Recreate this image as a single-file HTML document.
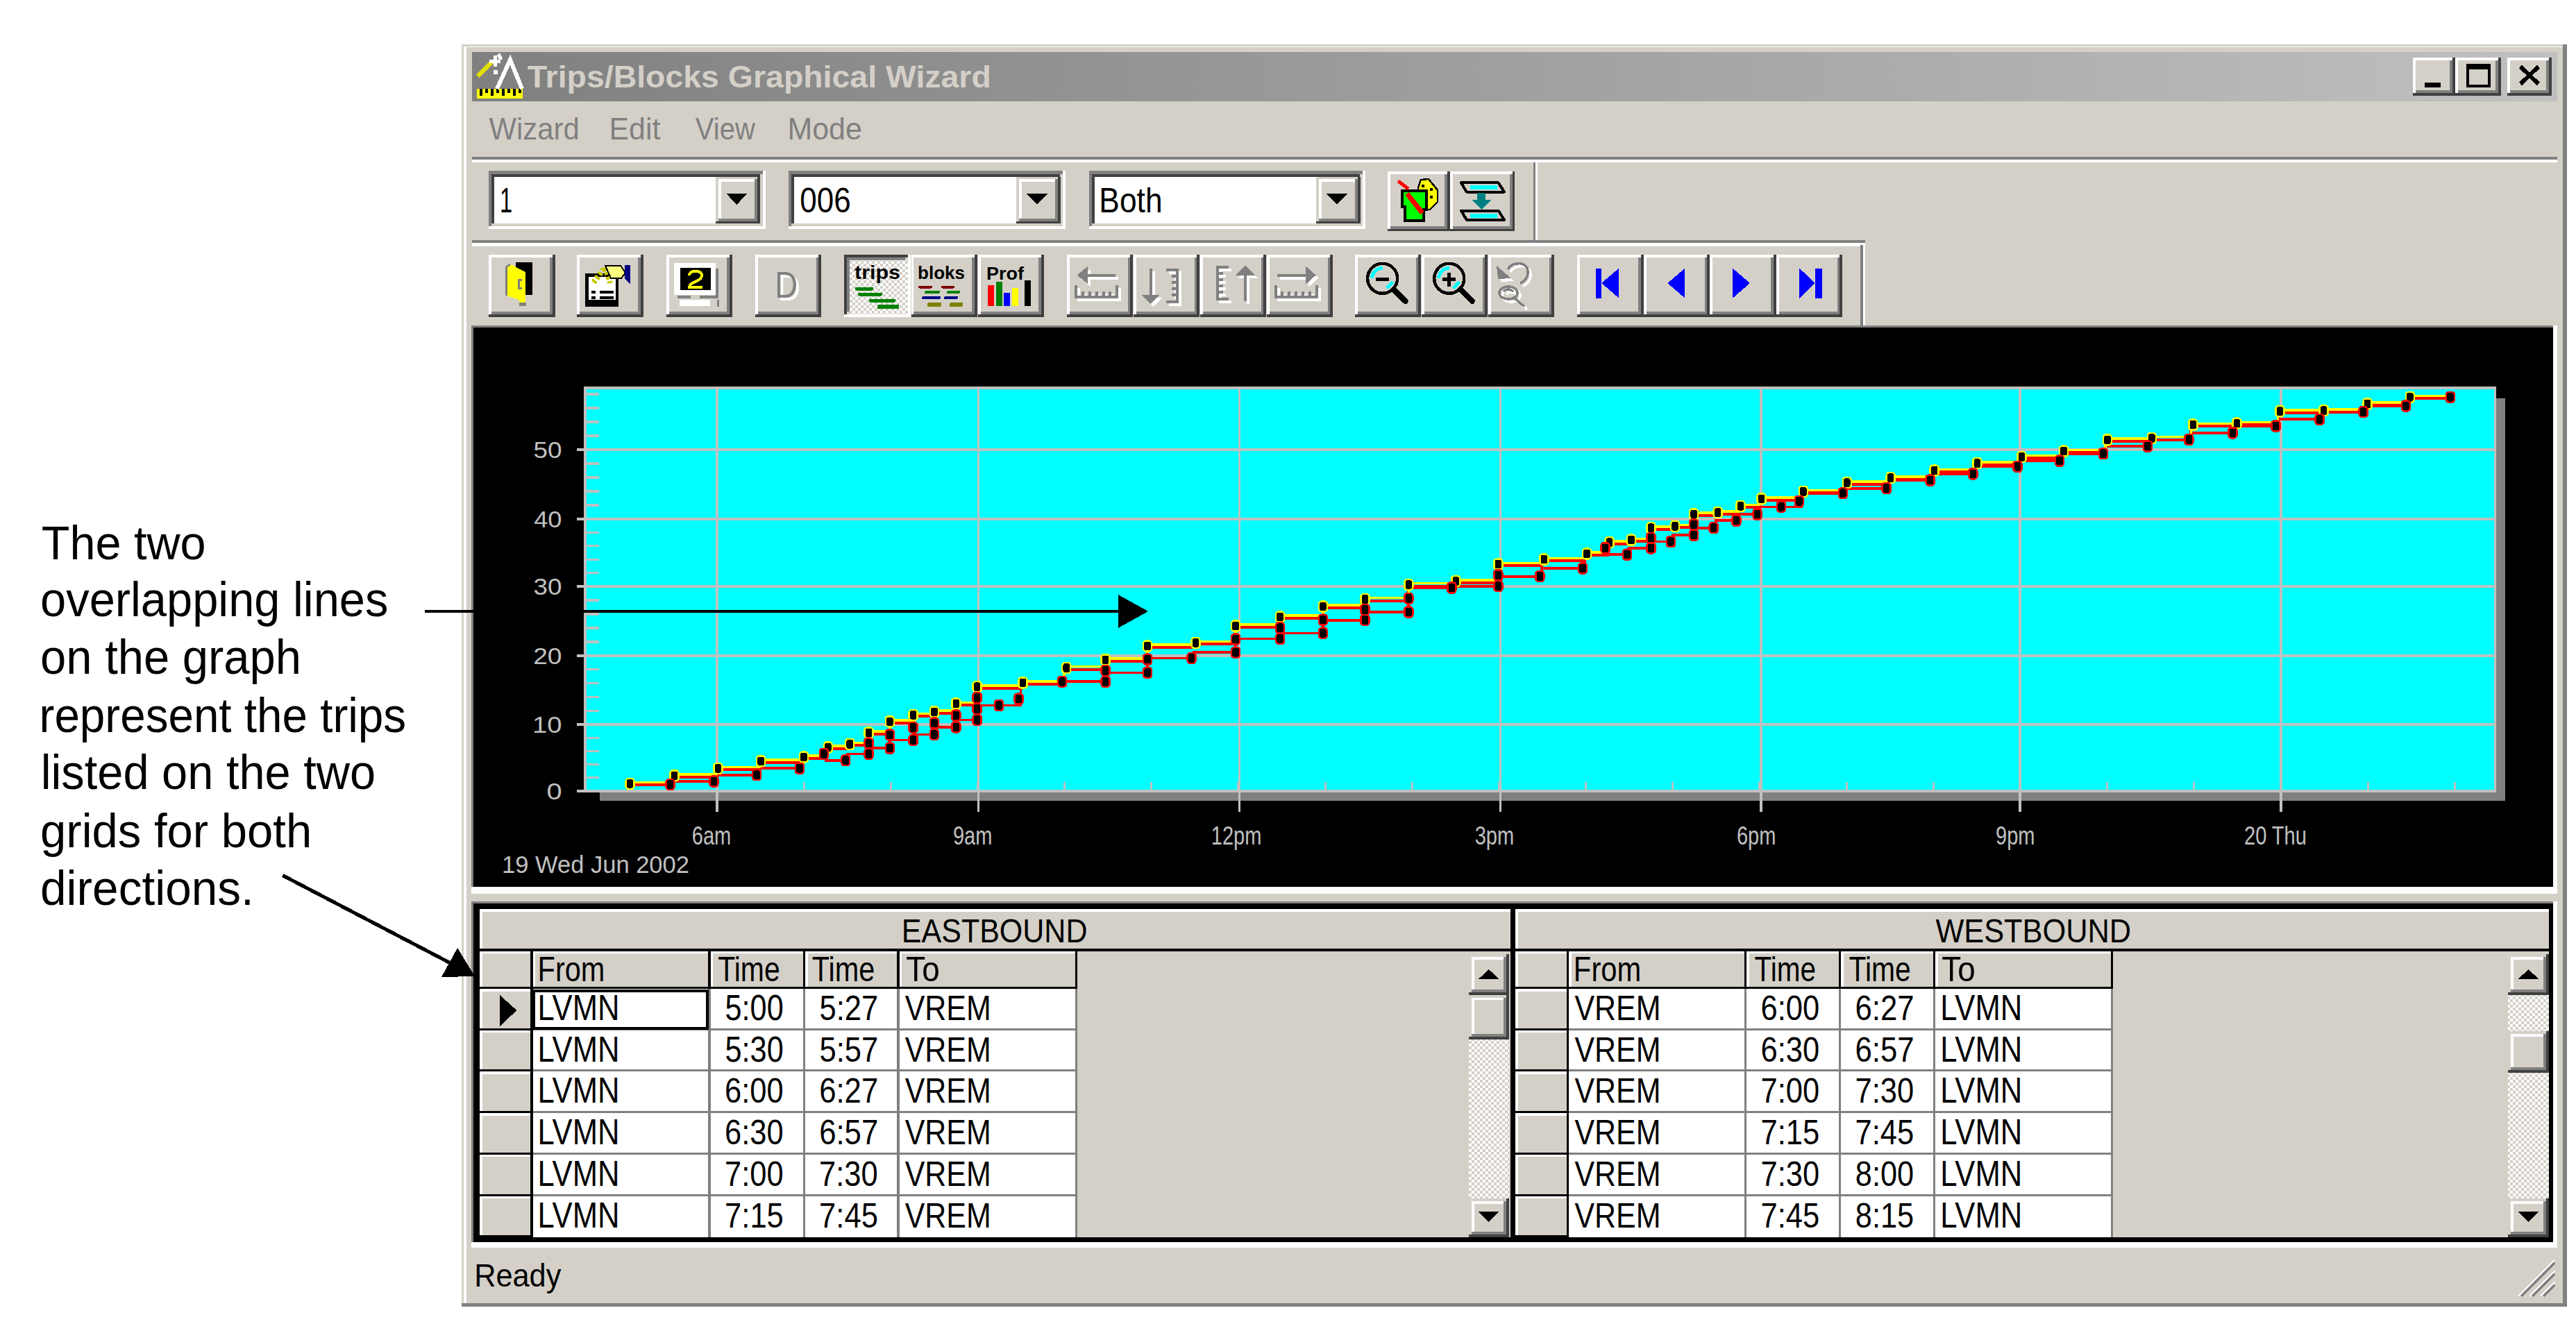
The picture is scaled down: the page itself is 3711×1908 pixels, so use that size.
<!DOCTYPE html>
<html><head><meta charset="utf-8"><style>
html,body{margin:0;padding:0;background:#fff;}
svg{display:block;font-family:"Liberation Sans",sans-serif;}
</style></head><body>
<svg width="3711" height="1908" viewBox="0 0 3711 1908" shape-rendering="crispEdges">
<rect width="3711" height="1908" fill="#FFFFFF"/>
<text transform="translate(59.70,805.90) scale(0.9585,1)" font-size="69.48" font-weight="normal" fill="#000" >The two</text>
<text transform="translate(58.09,887.60) scale(0.9615,1)" font-size="69.48" font-weight="normal" fill="#000" >overlapping lines</text>
<text transform="translate(58.09,970.50) scale(0.9639,1)" font-size="69.48" font-weight="normal" fill="#000" >on the graph</text>
<text transform="translate(56.54,1054.70) scale(0.9442,1)" font-size="69.48" font-weight="normal" fill="#000" >represent the trips</text>
<text transform="translate(58.70,1136.70) scale(0.9610,1)" font-size="69.48" font-weight="normal" fill="#000" >listed on the two</text>
<text transform="translate(58.09,1221.00) scale(0.9644,1)" font-size="69.48" font-weight="normal" fill="#000" >grids for both</text>
<text transform="translate(58.06,1304.00) scale(0.9717,1)" font-size="69.48" font-weight="normal" fill="#000" >directions.</text>
<rect x="665.0" y="64.0" width="3033.0" height="1819.0" fill="#808080"/>
<rect x="665.0" y="64.0" width="3027.0" height="1814.0" fill="#D4D0C8"/>
<rect x="668.0" y="67.0" width="3024.0" height="1811.0" fill="#FFFFFF"/>
<rect x="672.0" y="68.0" width="3020.0" height="1810.0" fill="#D4D0C8"/>
<defs><linearGradient id="tg" x1="0" x2="1" y1="0" y2="0"><stop offset="0" stop-color="#808080"/><stop offset="1" stop-color="#C0C0C0"/></linearGradient><pattern id="chk" width="8" height="8" patternUnits="userSpaceOnUse"><rect width="8" height="8" fill="#FFFFFF"/><rect width="4" height="4" fill="#D4D0C8"/><rect x="4" y="4" width="4" height="4" fill="#D4D0C8"/></pattern></defs>
<rect x="679.5" y="75.0" width="3004.5" height="71.0" fill="url(#tg)"/>
<text transform="translate(759.78,126.10) scale(1.0412,1)" font-size="44.62" font-weight="bold" fill="#D4D0C8" >Trips/Blocks Graphical Wizard</text>
<g>
<rect x="687.0" y="128.0" width="66.0" height="14.0" fill="#FFFF00"/>
<rect x="691.0" y="128.0" width="4.0" height="10.0" fill="#000000"/>
<rect x="699.0" y="128.0" width="4.0" height="6.0" fill="#000000"/>
<rect x="707.0" y="128.0" width="4.0" height="10.0" fill="#000000"/>
<rect x="715.0" y="128.0" width="4.0" height="6.0" fill="#000000"/>
<rect x="723.0" y="128.0" width="4.0" height="10.0" fill="#000000"/>
<rect x="731.0" y="128.0" width="4.0" height="6.0" fill="#000000"/>
<rect x="739.0" y="128.0" width="4.0" height="10.0" fill="#000000"/>
<rect x="747.0" y="128.0" width="4.0" height="6.0" fill="#000000"/>
<line x1="688" y1="110" x2="710" y2="88" stroke="#E0E000" stroke-width="7"/>
<polyline points="716,128 735,86 752,128" fill="none" stroke="#FFFFFF" stroke-width="6"/>
<path d="M705,88 h16 M713,80 v16 M718,78 l4,8" stroke="#FFFFFF" stroke-width="5"/>
<rect x="711.0" y="101.0" width="6.0" height="6.0" fill="#FFFFFF"/>
</g>
<rect x="3476.0" y="82.5" width="61.0" height="55.5" fill="#404040"/>
<rect x="3476.0" y="82.5" width="57.0" height="51.5" fill="#FFFFFF"/>
<rect x="3480.0" y="86.5" width="53.0" height="47.5" fill="#808080"/>
<rect x="3480.0" y="86.5" width="49.0" height="43.5" fill="#D4D0C8"/>
<rect x="3537.0" y="82.5" width="66.0" height="55.5" fill="#404040"/>
<rect x="3537.0" y="82.5" width="62.0" height="51.5" fill="#FFFFFF"/>
<rect x="3541.0" y="86.5" width="58.0" height="47.5" fill="#808080"/>
<rect x="3541.0" y="86.5" width="54.0" height="43.5" fill="#D4D0C8"/>
<rect x="3612.0" y="82.5" width="64.0" height="55.5" fill="#404040"/>
<rect x="3612.0" y="82.5" width="60.0" height="51.5" fill="#FFFFFF"/>
<rect x="3616.0" y="86.5" width="56.0" height="47.5" fill="#808080"/>
<rect x="3616.0" y="86.5" width="52.0" height="43.5" fill="#D4D0C8"/>
<rect x="3492.8" y="118.5" width="23.0" height="7.1" fill="#000000"/>
<rect x="3553.0" y="91.5" width="35.0" height="34.1" fill="#000000"/>
<rect x="3557.0" y="99.5" width="27.0" height="22.1" fill="#D4D0C8"/>
<path d="M3631,96 L3657,121 M3657,96 L3631,121" stroke="#000" stroke-width="6"/>
<text transform="translate(704.42,201.00) scale(0.9293,1)" font-size="45.06" font-weight="normal" fill="#808080" >Wizard</text>
<text transform="translate(877.49,201.00) scale(0.9509,1)" font-size="45.06" font-weight="normal" fill="#808080" >Edit</text>
<text transform="translate(1001.82,201.00) scale(0.8886,1)" font-size="45.06" font-weight="normal" fill="#808080" >View</text>
<text transform="translate(1134.48,201.00) scale(0.9532,1)" font-size="45.06" font-weight="normal" fill="#808080" >Mode</text>
<rect x="679.5" y="226.0" width="3004.5" height="4.0" fill="#808080"/>
<rect x="679.5" y="230.0" width="3004.5" height="4.0" fill="#FFFFFF"/>
<rect x="704.0" y="246.3" width="399.0" height="84.1" fill="#FFFFFF"/>
<rect x="704.0" y="246.3" width="394.8" height="79.9" fill="#808080"/>
<rect x="708.2" y="250.5" width="390.6" height="75.7" fill="#D4D0C8"/>
<rect x="708.2" y="250.5" width="386.4" height="71.5" fill="#404040"/>
<rect x="712.4" y="254.7" width="382.2" height="67.3" fill="#FFFFFF"/>
<rect x="1031.3" y="254.5" width="63.5" height="67.9" fill="#404040"/>
<rect x="1031.3" y="254.5" width="59.6" height="64.0" fill="#D4D0C8"/>
<rect x="1035.2" y="258.4" width="55.7" height="60.1" fill="#808080"/>
<rect x="1035.2" y="258.4" width="51.8" height="56.2" fill="#FFFFFF"/>
<rect x="1039.1" y="262.3" width="47.9" height="52.3" fill="#D4D0C8"/>
<polygon points="1046.3,279.0 1076.3,279.0 1061.3,295.0" fill="#000"/>
<text transform="translate(720.11,306.00) scale(0.6618,1)" font-size="49.42" font-weight="normal" fill="#000" >1</text>
<rect x="1135.6" y="246.3" width="399.4" height="84.1" fill="#FFFFFF"/>
<rect x="1135.6" y="246.3" width="395.2" height="79.9" fill="#808080"/>
<rect x="1139.8" y="250.5" width="391.0" height="75.7" fill="#D4D0C8"/>
<rect x="1139.8" y="250.5" width="386.8" height="71.5" fill="#404040"/>
<rect x="1144.0" y="254.7" width="382.6" height="67.3" fill="#FFFFFF"/>
<rect x="1464.0" y="254.5" width="63.5" height="67.9" fill="#404040"/>
<rect x="1464.0" y="254.5" width="59.6" height="64.0" fill="#D4D0C8"/>
<rect x="1467.9" y="258.4" width="55.7" height="60.1" fill="#808080"/>
<rect x="1467.9" y="258.4" width="51.8" height="56.2" fill="#FFFFFF"/>
<rect x="1471.8" y="262.3" width="47.9" height="52.3" fill="#D4D0C8"/>
<polygon points="1479.0,279.0 1509.0,279.0 1494.0,295.0" fill="#000"/>
<text transform="translate(1152.28,306.00) scale(0.8896,1)" font-size="49.42" font-weight="normal" fill="#000" >006</text>
<rect x="1569.0" y="246.3" width="398.2" height="84.1" fill="#FFFFFF"/>
<rect x="1569.0" y="246.3" width="394.0" height="79.9" fill="#808080"/>
<rect x="1573.2" y="250.5" width="389.8" height="75.7" fill="#D4D0C8"/>
<rect x="1573.2" y="250.5" width="385.6" height="71.5" fill="#404040"/>
<rect x="1577.4" y="254.7" width="381.4" height="67.3" fill="#FFFFFF"/>
<rect x="1896.0" y="254.5" width="63.5" height="67.9" fill="#404040"/>
<rect x="1896.0" y="254.5" width="59.6" height="64.0" fill="#D4D0C8"/>
<rect x="1899.9" y="258.4" width="55.7" height="60.1" fill="#808080"/>
<rect x="1899.9" y="258.4" width="51.8" height="56.2" fill="#FFFFFF"/>
<rect x="1903.8" y="262.3" width="47.9" height="52.3" fill="#D4D0C8"/>
<polygon points="1911.0,279.0 1941.0,279.0 1926.0,295.0" fill="#000"/>
<text transform="translate(1583.36,306.00) scale(0.8973,1)" font-size="49.42" font-weight="normal" fill="#000" >Both</text>
<rect x="1999.3" y="246.8" width="89.5" height="86.6" fill="#404040"/>
<rect x="1999.3" y="246.8" width="85.6" height="82.7" fill="#FFFFFF"/>
<rect x="2003.2" y="250.7" width="81.7" height="78.8" fill="#808080"/>
<rect x="2003.2" y="250.7" width="77.8" height="74.9" fill="#D4D0C8"/>
<rect x="2088.8" y="246.8" width="93.6" height="86.6" fill="#404040"/>
<rect x="2088.8" y="246.8" width="89.7" height="82.7" fill="#FFFFFF"/>
<rect x="2092.7" y="250.7" width="85.8" height="78.8" fill="#808080"/>
<rect x="2092.7" y="250.7" width="81.9" height="74.9" fill="#D4D0C8"/>
<rect x="2209.0" y="234.0" width="3.0" height="112.0" fill="#808080"/>
<rect x="2212.0" y="234.0" width="3.0" height="112.0" fill="#FFFFFF"/>
<rect x="679.5" y="346.3" width="2007.5" height="3.3" fill="#808080"/>
<rect x="679.5" y="349.6" width="2007.5" height="5.4" fill="#FFFFFF"/>
<rect x="2680.4" y="353.0" width="3.6" height="117.0" fill="#808080"/>
<rect x="2684.0" y="353.0" width="3.0" height="117.0" fill="#FFFFFF"/>
<rect x="704.0" y="367.0" width="95.5" height="90.0" fill="#404040"/>
<rect x="704.0" y="367.0" width="91.6" height="86.1" fill="#FFFFFF"/>
<rect x="707.9" y="370.9" width="87.7" height="82.2" fill="#808080"/>
<rect x="707.9" y="370.9" width="83.8" height="78.3" fill="#D4D0C8"/>
<rect x="831.3" y="367.0" width="95.5" height="90.0" fill="#404040"/>
<rect x="831.3" y="367.0" width="91.6" height="86.1" fill="#FFFFFF"/>
<rect x="835.2" y="370.9" width="87.7" height="82.2" fill="#808080"/>
<rect x="835.2" y="370.9" width="83.8" height="78.3" fill="#D4D0C8"/>
<rect x="959.6" y="367.0" width="95.5" height="90.0" fill="#404040"/>
<rect x="959.6" y="367.0" width="91.6" height="86.1" fill="#FFFFFF"/>
<rect x="963.5" y="370.9" width="87.7" height="82.2" fill="#808080"/>
<rect x="963.5" y="370.9" width="83.8" height="78.3" fill="#D4D0C8"/>
<rect x="1087.8" y="367.0" width="95.5" height="90.0" fill="#404040"/>
<rect x="1087.8" y="367.0" width="91.6" height="86.1" fill="#FFFFFF"/>
<rect x="1091.7" y="370.9" width="87.7" height="82.2" fill="#808080"/>
<rect x="1091.7" y="370.9" width="83.8" height="78.3" fill="#D4D0C8"/>
<rect x="1216.3" y="367.0" width="95.5" height="90.0" fill="#FFFFFF"/>
<rect x="1216.3" y="367.0" width="91.6" height="86.1" fill="#404040"/>
<rect x="1220.2" y="370.9" width="87.7" height="82.2" fill="#D4D0C8"/>
<rect x="1220.2" y="370.9" width="83.8" height="78.3" fill="#808080"/>
<rect x="1224.1" y="374.8" width="83.8" height="78.3" fill="url(#chk)"/>
<rect x="1312.5" y="367.0" width="95.5" height="90.0" fill="#404040"/>
<rect x="1312.5" y="367.0" width="91.6" height="86.1" fill="#FFFFFF"/>
<rect x="1316.4" y="370.9" width="87.7" height="82.2" fill="#808080"/>
<rect x="1316.4" y="370.9" width="83.8" height="78.3" fill="#D4D0C8"/>
<rect x="1408.7" y="367.0" width="95.5" height="90.0" fill="#404040"/>
<rect x="1408.7" y="367.0" width="91.6" height="86.1" fill="#FFFFFF"/>
<rect x="1412.6" y="370.9" width="87.7" height="82.2" fill="#808080"/>
<rect x="1412.6" y="370.9" width="83.8" height="78.3" fill="#D4D0C8"/>
<rect x="1536.8" y="367.0" width="95.5" height="90.0" fill="#404040"/>
<rect x="1536.8" y="367.0" width="91.6" height="86.1" fill="#FFFFFF"/>
<rect x="1540.7" y="370.9" width="87.7" height="82.2" fill="#808080"/>
<rect x="1540.7" y="370.9" width="83.8" height="78.3" fill="#D4D0C8"/>
<rect x="1632.8" y="367.0" width="95.5" height="90.0" fill="#404040"/>
<rect x="1632.8" y="367.0" width="91.6" height="86.1" fill="#FFFFFF"/>
<rect x="1636.7" y="370.9" width="87.7" height="82.2" fill="#808080"/>
<rect x="1636.7" y="370.9" width="83.8" height="78.3" fill="#D4D0C8"/>
<rect x="1728.8" y="367.0" width="95.5" height="90.0" fill="#404040"/>
<rect x="1728.8" y="367.0" width="91.6" height="86.1" fill="#FFFFFF"/>
<rect x="1732.7" y="370.9" width="87.7" height="82.2" fill="#808080"/>
<rect x="1732.7" y="370.9" width="83.8" height="78.3" fill="#D4D0C8"/>
<rect x="1824.8" y="367.0" width="95.5" height="90.0" fill="#404040"/>
<rect x="1824.8" y="367.0" width="91.6" height="86.1" fill="#FFFFFF"/>
<rect x="1828.7" y="370.9" width="87.7" height="82.2" fill="#808080"/>
<rect x="1828.7" y="370.9" width="83.8" height="78.3" fill="#D4D0C8"/>
<rect x="1951.8" y="367.0" width="95.5" height="90.0" fill="#404040"/>
<rect x="1951.8" y="367.0" width="91.6" height="86.1" fill="#FFFFFF"/>
<rect x="1955.7" y="370.9" width="87.7" height="82.2" fill="#808080"/>
<rect x="1955.7" y="370.9" width="83.8" height="78.3" fill="#D4D0C8"/>
<rect x="2047.8" y="367.0" width="95.5" height="90.0" fill="#404040"/>
<rect x="2047.8" y="367.0" width="91.6" height="86.1" fill="#FFFFFF"/>
<rect x="2051.7" y="370.9" width="87.7" height="82.2" fill="#808080"/>
<rect x="2051.7" y="370.9" width="83.8" height="78.3" fill="#D4D0C8"/>
<rect x="2143.8" y="367.0" width="95.5" height="90.0" fill="#404040"/>
<rect x="2143.8" y="367.0" width="91.6" height="86.1" fill="#FFFFFF"/>
<rect x="2147.7" y="370.9" width="87.7" height="82.2" fill="#808080"/>
<rect x="2147.7" y="370.9" width="83.8" height="78.3" fill="#D4D0C8"/>
<rect x="2272.3" y="367.0" width="95.5" height="90.0" fill="#404040"/>
<rect x="2272.3" y="367.0" width="91.6" height="86.1" fill="#FFFFFF"/>
<rect x="2276.2" y="370.9" width="87.7" height="82.2" fill="#808080"/>
<rect x="2276.2" y="370.9" width="83.8" height="78.3" fill="#D4D0C8"/>
<rect x="2367.8" y="367.0" width="95.5" height="90.0" fill="#404040"/>
<rect x="2367.8" y="367.0" width="91.6" height="86.1" fill="#FFFFFF"/>
<rect x="2371.7" y="370.9" width="87.7" height="82.2" fill="#808080"/>
<rect x="2371.7" y="370.9" width="83.8" height="78.3" fill="#D4D0C8"/>
<rect x="2463.3" y="367.0" width="95.5" height="90.0" fill="#404040"/>
<rect x="2463.3" y="367.0" width="91.6" height="86.1" fill="#FFFFFF"/>
<rect x="2467.2" y="370.9" width="87.7" height="82.2" fill="#808080"/>
<rect x="2467.2" y="370.9" width="83.8" height="78.3" fill="#D4D0C8"/>
<rect x="2558.8" y="367.0" width="95.5" height="90.0" fill="#404040"/>
<rect x="2558.8" y="367.0" width="91.6" height="86.1" fill="#FFFFFF"/>
<rect x="2562.7" y="370.9" width="87.7" height="82.2" fill="#808080"/>
<rect x="2562.7" y="370.9" width="83.8" height="78.3" fill="#D4D0C8"/>
<g>
<rect x="743.3" y="378.2" width="23.7" height="46.8" fill="#000000"/>
<polygon points="729,385 735,381 740,383 745,386 757,392 757,436 748,436 748,432 741,430 735,428 729,426" fill="#FFFF00"/>
<polyline points="729,426 729,385 735,381" fill="none" stroke="#808080" stroke-width="3"/>
<path d="M752,403 h-5 v12 h5" fill="none" stroke="#808080" stroke-width="3"/>
<rect x="748.0" y="436.0" width="10.0" height="5.0" fill="#808080"/>
</g>
<rect x="843.2" y="394.2" width="48.2" height="47.6" fill="#000000"/>
<rect x="848.0" y="399.0" width="39.0" height="33.0" fill="#FFFFFF"/>
<rect x="852.0" y="419.0" width="6.0" height="4.0" fill="#000000"/>
<rect x="864.0" y="419.0" width="20.0" height="4.0" fill="#000000"/>
<rect x="852.0" y="427.0" width="6.0" height="4.0" fill="#000000"/>
<rect x="864.0" y="427.0" width="20.0" height="4.0" fill="#000000"/>
<polyline points="855,407 872,385 879,408" fill="none" stroke="#C8C800" stroke-width="8" stroke-dasharray="4 3"/>
<polygon points="872,383 894,383 901,393 895,401 880,401" fill="#FFFF80" stroke="#000" stroke-width="2"/>
<rect x="900.0" y="382.0" width="8.0" height="19.0" fill="#000080"/>
<polygon points="900,401 908,401 908,410" fill="#000080"/>
<rect x="1031.0" y="387.0" width="4.0" height="43.0" fill="#808080"/>
<rect x="971.0" y="378.9" width="60.2" height="46.1" fill="#FFFFFF"/>
<rect x="979.5" y="385.9" width="44.0" height="32.1" fill="#000000"/>
<path d="M993,397 q0,-6 9,-6 q9,0 9,6 q0,5 -9,9 q-9,3 -9,8 h19" fill="none" stroke="#FFFF00" stroke-width="4"/>
<rect x="976.0" y="426.0" width="19.0" height="4.0" fill="#808080"/>
<rect x="1008.0" y="426.0" width="27.0" height="4.0" fill="#808080"/>
<rect x="979.0" y="432.0" width="44.0" height="9.0" fill="#FFFFFF"/>
<rect x="1033.0" y="432.0" width="3.0" height="10.0" fill="#808080"/>
<text transform="translate(1120.26,433.00) scale(0.8477,1)" font-size="53.78" font-weight="normal" fill="#FFFFFF" >D</text>
<text transform="translate(1116.26,429.00) scale(0.8477,1)" font-size="53.78" font-weight="normal" fill="#808080" >D</text>
<text x="1231" y="402" font-size="28" font-weight="bold" fill="#000" textLength="66" lengthAdjust="spacingAndGlyphs">trips</text>
<rect x="1232" y="413.5" width="26" height="5.0" rx="2" fill="#008000"/>
<rect x="1236" y="421.5" width="35" height="5.0" rx="2" fill="#008000"/>
<rect x="1252" y="430.5" width="38" height="5.0" rx="2" fill="#008000"/>
<rect x="1264" y="439" width="31" height="6" rx="2" fill="#008000"/>
<text x="1322" y="402" font-size="26" font-weight="bold" fill="#000" textLength="68" lengthAdjust="spacingAndGlyphs">bloks</text>
<rect x="1323" y="411.5" width="20" height="4.0" rx="2" fill="#800000"/>
<rect x="1356" y="411.5" width="19" height="4.0" rx="2" fill="#800000"/>
<rect x="1332" y="419" width="22" height="4" rx="2" fill="#008000"/>
<rect x="1364" y="419" width="19" height="4" rx="2" fill="#008000"/>
<rect x="1328" y="427" width="27" height="4" rx="2" fill="#000080"/>
<rect x="1360" y="427" width="20" height="4" rx="2" fill="#000080"/>
<rect x="1336" y="436" width="20" height="6" rx="2" fill="#808000"/>
<rect x="1368" y="436" width="19" height="6" rx="2" fill="#808000"/>
<text x="1421" y="403" font-size="26" font-weight="bold" fill="#000" textLength="54" lengthAdjust="spacingAndGlyphs">Prof</text>
<rect x="1423.0" y="411.0" width="8.5" height="30.0" fill="#FF0000"/>
<rect x="1435.0" y="406.0" width="8.5" height="35.0" fill="#008000"/>
<rect x="1446.0" y="422.0" width="8.5" height="19.0" fill="#0000FF"/>
<rect x="1458.0" y="415.0" width="8.5" height="26.0" fill="#FFFF00"/>
<rect x="1476.0" y="404.0" width="8.5" height="37.0" fill="#000000"/>
<polygon points="1551.7,396.5 1567.3,383.3 1567.3,409.7" fill="#FFFFFF" transform="translate(4,4)"/>
<polygon points="1551.7,396.5 1567.3,383.3 1567.3,409.7" fill="#808080"/>
<path d="M1567,396.5 H1607" fill="none" stroke="#FFFFFF" stroke-width="4" transform="translate(4,4)"/>
<path d="M1567,396.5 H1607" fill="none" stroke="#808080" stroke-width="4"/>
<path d="M1550.3,411 V427.5 H1609 V411 M1559.5,427.5 V420 M1569.6,427.5 V420 M1579.7,427.5 V420 M1589.8,427.5 V420 M1599,427.5 V420" fill="none" stroke="#FFFFFF" stroke-width="4" transform="translate(4,4)"/>
<path d="M1550.3,411 V427.5 H1609 V411 M1559.5,427.5 V420 M1569.6,427.5 V420 M1579.7,427.5 V420 M1589.8,427.5 V420 M1599,427.5 V420" fill="none" stroke="#808080" stroke-width="4"/>
<path d="M1658.3,387 V425" fill="none" stroke="#FFFFFF" stroke-width="4" transform="translate(4,4)"/>
<path d="M1658.3,387 V425" fill="none" stroke="#808080" stroke-width="4"/>
<polygon points="1644,425 1670.5,425 1657.5,437.6" fill="#FFFFFF" transform="translate(4,4)"/>
<polygon points="1644,425 1670.5,425 1657.5,437.6" fill="#808080"/>
<path d="M1680,389 H1696.3 V435.3 H1680 M1696,398 H1688 M1696,407 H1688 M1696,416 H1688 M1696,425 H1688" fill="none" stroke="#FFFFFF" stroke-width="4" transform="translate(4,4)"/>
<path d="M1680,389 H1696.3 V435.3 H1680 M1696,398 H1688 M1696,407 H1688 M1696,416 H1688 M1696,425 H1688" fill="none" stroke="#808080" stroke-width="4"/>
<path d="M1770,385 H1753.8 V431 H1770 M1754,394 H1762 M1754,403 H1762 M1754,412 H1762 M1754,421 H1762" fill="none" stroke="#FFFFFF" stroke-width="4" transform="translate(4,4)"/>
<path d="M1770,385 H1753.8 V431 H1770 M1754,394 H1762 M1754,403 H1762 M1754,412 H1762 M1754,421 H1762" fill="none" stroke="#808080" stroke-width="4"/>
<polygon points="1780,397 1808,397 1794,382.6" fill="#FFFFFF" transform="translate(4,4)"/>
<polygon points="1780,397 1808,397 1794,382.6" fill="#808080"/>
<path d="M1794.2,397 V434" fill="none" stroke="#FFFFFF" stroke-width="4" transform="translate(4,4)"/>
<path d="M1794.2,397 V434" fill="none" stroke="#808080" stroke-width="4"/>
<path d="M1839.8,396.5 H1881" fill="none" stroke="#FFFFFF" stroke-width="4" transform="translate(4,4)"/>
<path d="M1839.8,396.5 H1881" fill="none" stroke="#808080" stroke-width="4"/>
<polygon points="1895.7,396.5 1881,383.3 1881,409.7" fill="#FFFFFF" transform="translate(4,4)"/>
<polygon points="1895.7,396.5 1881,383.3 1881,409.7" fill="#808080"/>
<path d="M1837.8,411 V427.5 H1897 V411 M1847,427.5 V420 M1857,427.5 V420 M1867,427.5 V420 M1877,427.5 V420 M1887,427.5 V420" fill="none" stroke="#FFFFFF" stroke-width="4" transform="translate(4,4)"/>
<path d="M1837.8,411 V427.5 H1897 V411 M1847,427.5 V420 M1857,427.5 V420 M1867,427.5 V420 M1877,427.5 V420 M1887,427.5 V420" fill="none" stroke="#808080" stroke-width="4"/>
<line x1="2007.6" y1="417" x2="2024.6" y2="434" stroke="#000" stroke-width="8" stroke-linecap="round"/>
<circle cx="1991.6" cy="401.3" r="21.5" fill="none" stroke="#000" stroke-width="4.5"/>
<path d="M1976.6,401.3 a15,15 0 0 1 15,-15" fill="none" stroke="#00FFFF" stroke-width="5"/>
<line x1="1997.6" y1="415" x2="2006.6" y2="406" stroke="#00FFFF" stroke-width="5"/>
<line x1="1981.6" y1="402.3" x2="2000.6" y2="402.3" stroke="#000" stroke-width="5"/>
<line x1="2103.7" y1="417" x2="2120.7" y2="434" stroke="#000" stroke-width="8" stroke-linecap="round"/>
<circle cx="2087.7" cy="401.3" r="21.5" fill="none" stroke="#000" stroke-width="4.5"/>
<path d="M2072.7,401.3 a15,15 0 0 1 15,-15" fill="none" stroke="#00FFFF" stroke-width="5"/>
<line x1="2093.7" y1="415" x2="2102.7" y2="406" stroke="#00FFFF" stroke-width="5"/>
<line x1="2077.7" y1="402.3" x2="2096.7" y2="402.3" stroke="#000" stroke-width="5"/>
<line x1="2087.2" y1="393" x2="2087.2" y2="413" stroke="#000" stroke-width="5"/>
<polygon points="2156,383 2177,401 2158,402" fill="#FFFFFF" transform="translate(4,4)"/>
<polygon points="2156,383 2177,401 2158,402" fill="#808080"/>
<path d="M2172,388 q6,-10 20,-8 q12,4 8,18 q-3,8 -10,10" fill="none" stroke="#FFFFFF" stroke-width="3.5" transform="translate(4,4)"/>
<path d="M2172,388 q6,-10 20,-8 q12,4 8,18 q-3,8 -10,10" fill="none" stroke="#808080" stroke-width="3.5"/>
<path d="M2160,422 a13,9 0 1 1 26,0 a13,9 0 1 1 -26,0 M2166,420 q7,-6 14,0 M2180,428 L2196,442" fill="none" stroke="#FFFFFF" stroke-width="3.5" transform="translate(4,4)"/>
<path d="M2160,422 a13,9 0 1 1 26,0 a13,9 0 1 1 -26,0 M2166,420 q7,-6 14,0 M2180,428 L2196,442" fill="none" stroke="#808080" stroke-width="3.5"/>
<polygon points="2043,271 2047,259 2058,258 2071,274 2071,291 2060,302 2054,302 2054,275 2043,275" fill="#FFFF00" stroke="#000" stroke-width="2.5"/>
<circle cx="2050" cy="268" r="2.5" fill="#000"/>
<circle cx="2062" cy="273" r="2.5" fill="#000"/>
<circle cx="2062" cy="284" r="2.5" fill="#000"/>
<polygon points="2020,275 2054.5,275 2054.5,302 2050.5,302 2050.5,317.6 2024.2,317.6 2024.2,297.5 2020,297.5" fill="#00FF00" stroke="#000" stroke-width="4"/>
<line x1="2027" y1="279" x2="2049" y2="307" stroke="#FF0000" stroke-width="7"/>
<line x1="2014" y1="261" x2="2029" y2="272" stroke="#FF0000" stroke-width="5"/>
<polygon points="2104.9,263.3 2158.5,263.3 2167,276.5 2112.7,276.5" fill="#D4D0C8" stroke="#000" stroke-width="4" stroke-linejoin="round"/>
<rect x="2118.0" y="267.3" width="39.0" height="6.0" fill="#00FFFF"/>
<polygon points="2104.9,303.5 2158.5,303.5 2167,316.7 2112.7,316.7" fill="#D4D0C8" stroke="#000" stroke-width="4" stroke-linejoin="round"/>
<rect x="2118.0" y="307.5" width="39.0" height="6.0" fill="#00FFFF"/>
<rect x="2128.0" y="278.0" width="12.0" height="14.0" fill="#008080"/>
<polygon points="2120,288 2148,288 2134,302" fill="#008080"/>
<rect x="2299.0" y="386.5" width="8.3" height="43.3" fill="#0000FF"/>
<polygon points="2307,408 2332.4,386.5 2332.4,429.8" fill="#0000FF"/>
<polygon points="2402.3,408 2427.4,386.5 2427.4,429.8" fill="#0000FF"/>
<polygon points="2521,408 2495.9,386.5 2495.9,429.8" fill="#0000FF"/>
<polygon points="2614.7,408 2592.3,386.5 2592.3,429.8" fill="#0000FF"/>
<rect x="2614.7" y="386.5" width="9.8" height="43.3" fill="#0000FF"/>
<rect x="679.0" y="469.0" width="3005.0" height="818.5" fill="#FFFFFF"/>
<rect x="679.0" y="469.0" width="2999.0" height="809.0" fill="#808080"/>
<rect x="682.0" y="472.0" width="2996.0" height="806.0" fill="#000000"/>
<rect x="864.0" y="1142.0" width="2745.0" height="12.0" fill="#808080"/>
<rect x="3594.0" y="574.0" width="15.0" height="580.0" fill="#808080"/>
<rect x="844.0" y="559.0" width="2750.0" height="581.0" fill="#00FFFF"/>
<rect x="841.0" y="557.0" width="2755.0" height="3.5" fill="#C0C0C0"/>
<rect x="841.0" y="557.0" width="3.5" height="585.0" fill="#C0C0C0"/>
<rect x="3593.0" y="557.0" width="3.0" height="585.0" fill="#C0C0C0"/>
<rect x="841.0" y="646.4" width="2755.0" height="3.2" fill="#C0C0C0"/>
<rect x="831.0" y="646.4" width="13.0" height="3.2" fill="#C0C0C0"/>
<rect x="841.0" y="746.4" width="2755.0" height="3.2" fill="#C0C0C0"/>
<rect x="831.0" y="746.4" width="13.0" height="3.2" fill="#C0C0C0"/>
<rect x="841.0" y="843.4" width="2755.0" height="3.2" fill="#C0C0C0"/>
<rect x="831.0" y="843.4" width="13.0" height="3.2" fill="#C0C0C0"/>
<rect x="841.0" y="943.4" width="2755.0" height="3.2" fill="#C0C0C0"/>
<rect x="831.0" y="943.4" width="13.0" height="3.2" fill="#C0C0C0"/>
<rect x="841.0" y="1042.4" width="2755.0" height="3.2" fill="#C0C0C0"/>
<rect x="831.0" y="1042.4" width="13.0" height="3.2" fill="#C0C0C0"/>
<rect x="841.0" y="1138.4" width="2755.0" height="3.2" fill="#C0C0C0"/>
<rect x="831.0" y="1138.4" width="13.0" height="3.2" fill="#C0C0C0"/>
<rect x="844.0" y="666.4" width="19.0" height="3.2" fill="#C0C0C0"/>
<rect x="844.0" y="686.4" width="19.0" height="3.2" fill="#C0C0C0"/>
<rect x="844.0" y="706.4" width="19.0" height="3.2" fill="#C0C0C0"/>
<rect x="844.0" y="726.4" width="19.0" height="3.2" fill="#C0C0C0"/>
<rect x="844.0" y="765.8" width="19.0" height="3.2" fill="#C0C0C0"/>
<rect x="844.0" y="785.2" width="19.0" height="3.2" fill="#C0C0C0"/>
<rect x="844.0" y="804.6" width="19.0" height="3.2" fill="#C0C0C0"/>
<rect x="844.0" y="824.0" width="19.0" height="3.2" fill="#C0C0C0"/>
<rect x="844.0" y="863.4" width="19.0" height="3.2" fill="#C0C0C0"/>
<rect x="844.0" y="883.4" width="19.0" height="3.2" fill="#C0C0C0"/>
<rect x="844.0" y="903.4" width="19.0" height="3.2" fill="#C0C0C0"/>
<rect x="844.0" y="923.4" width="19.0" height="3.2" fill="#C0C0C0"/>
<rect x="844.0" y="963.2" width="19.0" height="3.2" fill="#C0C0C0"/>
<rect x="844.0" y="983.0" width="19.0" height="3.2" fill="#C0C0C0"/>
<rect x="844.0" y="1002.8" width="19.0" height="3.2" fill="#C0C0C0"/>
<rect x="844.0" y="1022.6" width="19.0" height="3.2" fill="#C0C0C0"/>
<rect x="844.0" y="1061.6" width="19.0" height="3.2" fill="#C0C0C0"/>
<rect x="844.0" y="1080.8" width="19.0" height="3.2" fill="#C0C0C0"/>
<rect x="844.0" y="1100.0" width="19.0" height="3.2" fill="#C0C0C0"/>
<rect x="844.0" y="1119.2" width="19.0" height="3.2" fill="#C0C0C0"/>
<rect x="844.0" y="626.4" width="19.0" height="3.2" fill="#C0C0C0"/>
<rect x="844.0" y="606.4" width="19.0" height="3.2" fill="#C0C0C0"/>
<rect x="844.0" y="586.4" width="19.0" height="3.2" fill="#C0C0C0"/>
<rect x="844.0" y="566.4" width="19.0" height="3.2" fill="#C0C0C0"/>
<rect x="1031.4" y="559.0" width="3.2" height="611.0" fill="#C0C0C0"/>
<rect x="1408.0" y="559.0" width="3.2" height="611.0" fill="#C0C0C0"/>
<rect x="1784.0" y="559.0" width="3.2" height="611.0" fill="#C0C0C0"/>
<rect x="2160.1" y="559.0" width="3.2" height="611.0" fill="#C0C0C0"/>
<rect x="2535.4" y="559.0" width="3.2" height="611.0" fill="#C0C0C0"/>
<rect x="2908.4" y="559.0" width="3.2" height="611.0" fill="#C0C0C0"/>
<rect x="3284.4" y="559.0" width="3.2" height="611.0" fill="#C0C0C0"/>
<rect x="906.2" y="1127.0" width="3.2" height="14.0" fill="#C0C0C0"/>
<rect x="1031.4" y="1127.0" width="3.2" height="14.0" fill="#C0C0C0"/>
<rect x="1156.6" y="1127.0" width="3.2" height="14.0" fill="#C0C0C0"/>
<rect x="1281.7" y="1127.0" width="3.2" height="14.0" fill="#C0C0C0"/>
<rect x="1406.9" y="1127.0" width="3.2" height="14.0" fill="#C0C0C0"/>
<rect x="1532.1" y="1127.0" width="3.2" height="14.0" fill="#C0C0C0"/>
<rect x="1657.2" y="1127.0" width="3.2" height="14.0" fill="#C0C0C0"/>
<rect x="1782.4" y="1127.0" width="3.2" height="14.0" fill="#C0C0C0"/>
<rect x="1907.6" y="1127.0" width="3.2" height="14.0" fill="#C0C0C0"/>
<rect x="2032.7" y="1127.0" width="3.2" height="14.0" fill="#C0C0C0"/>
<rect x="2157.9" y="1127.0" width="3.2" height="14.0" fill="#C0C0C0"/>
<rect x="2283.1" y="1127.0" width="3.2" height="14.0" fill="#C0C0C0"/>
<rect x="2408.2" y="1127.0" width="3.2" height="14.0" fill="#C0C0C0"/>
<rect x="2533.4" y="1127.0" width="3.2" height="14.0" fill="#C0C0C0"/>
<rect x="2658.6" y="1127.0" width="3.2" height="14.0" fill="#C0C0C0"/>
<rect x="2783.7" y="1127.0" width="3.2" height="14.0" fill="#C0C0C0"/>
<rect x="2908.9" y="1127.0" width="3.2" height="14.0" fill="#C0C0C0"/>
<rect x="3034.1" y="1127.0" width="3.2" height="14.0" fill="#C0C0C0"/>
<rect x="3159.2" y="1127.0" width="3.2" height="14.0" fill="#C0C0C0"/>
<rect x="3284.4" y="1127.0" width="3.2" height="14.0" fill="#C0C0C0"/>
<rect x="3409.6" y="1127.0" width="3.2" height="14.0" fill="#C0C0C0"/>
<rect x="3534.7" y="1127.0" width="3.2" height="14.0" fill="#C0C0C0"/>
<text transform="translate(768.53,659.50) scale(1.1002,1)" font-size="33.43" font-weight="normal" fill="#C0C0C0" >50</text>
<text transform="translate(769.17,759.50) scale(1.0823,1)" font-size="33.43" font-weight="normal" fill="#C0C0C0" >40</text>
<text transform="translate(768.60,856.50) scale(1.0981,1)" font-size="33.43" font-weight="normal" fill="#C0C0C0" >30</text>
<text transform="translate(768.13,956.50) scale(1.1112,1)" font-size="33.43" font-weight="normal" fill="#C0C0C0" >20</text>
<text transform="translate(767.10,1055.50) scale(1.1400,1)" font-size="33.43" font-weight="normal" fill="#C0C0C0" >10</text>
<text transform="translate(787.45,1151.50) scale(1.1889,1)" font-size="33.43" font-weight="normal" fill="#C0C0C0" >0</text>
<text transform="translate(996.77,1216.70) scale(0.7992,1)" font-size="36.34" font-weight="normal" fill="#C0C0C0" >6am</text>
<text transform="translate(1372.93,1216.70) scale(0.7992,1)" font-size="36.34" font-weight="normal" fill="#C0C0C0" >9am</text>
<text transform="translate(1744.83,1216.70) scale(0.7992,1)" font-size="36.34" font-weight="normal" fill="#C0C0C0" >12pm</text>
<text transform="translate(2124.66,1216.70) scale(0.7992,1)" font-size="36.34" font-weight="normal" fill="#C0C0C0" >3pm</text>
<text transform="translate(2501.97,1216.70) scale(0.7992,1)" font-size="36.34" font-weight="normal" fill="#C0C0C0" >6pm</text>
<text transform="translate(2875.03,1216.70) scale(0.7992,1)" font-size="36.34" font-weight="normal" fill="#C0C0C0" >9pm</text>
<text transform="translate(3233.03,1216.70) scale(0.7992,1)" font-size="36.34" font-weight="normal" fill="#C0C0C0" >20 Thu</text>
<text transform="translate(723.07,1258.30) scale(0.9895,1)" font-size="34.88" font-weight="normal" fill="#C0C0C0" >19 Wed Jun 2002</text>
<path d="M968.5,1126.0 L1031.4,1126.0 L1031.4,1116.6 L1093.1,1116.6 L1093.1,1107.3 L1154.9,1107.3 L1154.9,1091.0 L1189.8,1091.0 L1189.8,1095.7 L1221.2,1095.7 L1221.2,1086.4 L1251.5,1086.4 L1251.5,1078.2 L1281.8,1078.2 L1281.8,1066.5 L1315.6,1066.5 L1315.6,1058.4 L1345.9,1058.4 L1345.9,1047.9 L1377.3,1047.9 L1377.3,1037.4 L1407.6,1037.4 L1407.6,1016.5 L1470.5,1016.5 L1439.0,1016.5 L1470.5,1016.5 L1470.5,983.9 L1533.2,983.9 L1533.2,982.3 L1592.6,982.3 L1592.6,969.4 L1653.1,969.4 L1653.1,948.5 L1719.5,948.5 L1719.5,940.3 L1780.1,940.3 L1780.1,920.5 L1844.1,920.5 L1844.1,912.4 L1905.9,912.4 L1905.9,893.7 L1966.4,893.7 L1966.4,882.1 L2029.3,882.1 L2029.3,847.0 L2094.3,847.0 L2094.3,844.6 L2158.4,844.6 L2158.4,830.6 L2221.3,830.6 L2221.3,819.0 L2283.0,819.0 L2283.0,798.0 L2315.6,798.0 L2315.6,799.2 L2347.0,799.2 L2347.0,789.8 L2378.5,789.8 L2378.5,780.5 L2410.0,780.5 L2410.0,771.2 L2440.2,771.2 L2440.2,760.7 L2471.7,760.7 L2471.7,750.2 L2504.3,750.2 L2504.3,741.0 L2534.6,741.0 L2534.6,730.4 L2594.9,730.4 L2566.0,730.4 L2594.9,730.4 L2594.9,710.7 L2657.8,710.7 L2657.8,703.7 L2720.7,703.7 L2720.7,692.1 L2783.6,692.1 L2783.6,682.8 L2845.3,682.8 L2845.3,672.3 L2909.4,672.3 L2909.4,664.1 L2970.0,664.1 L2970.0,653.7 L3032.9,653.7 L3032.9,643.2 L3096.9,643.2 L3096.9,633.5 L3156.3,633.5 L3156.3,623.8 L3219.4,623.8 L3219.4,614.0 L3281.5,614.0 L3281.5,604.3 L3344.6,604.3 L3344.6,593.7 L3407.6,593.7 L3407.6,585.0 L3468.8,585.0 L3468.8,572.3 L3529.9,572.3 L3529.9,572.3 L3532.9,572.3" fill="none" stroke="#FF0000" stroke-width="3.8"/>
<path d="M907.5,1129.4 L968.5,1129.4 L968.5,1117.8 L1031.4,1117.8 L1031.4,1107.3 L1093.1,1107.3 L1093.1,1096.8 L1154.9,1096.8 L1154.9,1091.0 L1189.8,1091.0 L1189.8,1077.0 L1221.2,1077.0 L1221.2,1072.4 L1251.5,1072.4 L1251.5,1056.0 L1281.8,1056.0 L1281.8,1039.8 L1315.6,1039.8 L1315.6,1030.4 L1345.9,1030.4 L1345.9,1025.8 L1377.3,1025.8 L1377.3,1014.1 L1407.6,1014.1 L1407.6,989.7 L1470.5,989.7 L1470.5,983.9 L1533.2,983.9 L1533.2,962.5 L1592.6,962.5 L1592.6,950.8 L1653.1,950.8 L1653.1,931.0 L1719.5,931.0 L1719.5,926.4 L1780.1,926.4 L1780.1,901.9 L1844.1,901.9 L1844.1,889.0 L1905.9,889.0 L1905.9,874.0 L1966.4,874.0 L1966.4,863.5 L2029.3,863.5 L2029.3,842.5 L2094.3,842.5 L2094.3,837.6 L2158.4,837.6 L2158.4,813.1 L2221.3,813.1 L2221.3,806.2 L2283.0,806.2 L2283.0,798.0 L2315.6,798.0 L2315.6,781.7 L2347.0,781.7 L2347.0,778.2 L2378.5,778.2 L2378.5,760.7 L2410.0,760.7 L2410.0,758.4 L2440.2,758.4 L2440.2,741.0 L2471.7,741.0 L2471.7,738.6 L2504.3,738.6 L2504.3,729.3 L2534.6,729.3 L2534.6,718.8 L2594.9,718.8 L2594.9,708.4 L2657.8,708.4 L2657.8,695.6 L2720.7,695.6 L2720.7,688.6 L2783.6,688.6 L2783.6,678.1 L2845.3,678.1 L2845.3,667.6 L2909.4,667.6 L2909.4,658.3 L2970.0,658.3 L2970.0,650.2 L3032.9,650.2 L3032.9,633.9 L3096.9,633.9 L3096.9,631.5 L3156.3,631.5 L3156.3,612.1 L3219.4,612.1 L3219.4,610.2 L3281.5,610.2 L3281.5,592.7 L3344.6,592.7 L3344.6,591.7 L3407.6,591.7 L3407.6,582.0 L3468.8,582.0 L3468.8,572.3 L3529.9,572.3 L3529.9,572.3 L3532.9,572.3" fill="none" stroke="#FF0000" stroke-width="4" transform="translate(0,2)"/>
<path d="M907.5,1129.4 L968.5,1129.4 L968.5,1117.8 L1031.4,1117.8 L1031.4,1107.3 L1093.1,1107.3 L1093.1,1096.8 L1154.9,1096.8 L1154.9,1091.0 L1189.8,1091.0 L1189.8,1077.0 L1221.2,1077.0 L1221.2,1072.4 L1251.5,1072.4 L1251.5,1056.0 L1281.8,1056.0 L1281.8,1039.8 L1315.6,1039.8 L1315.6,1030.4 L1345.9,1030.4 L1345.9,1025.8 L1377.3,1025.8 L1377.3,1014.1 L1407.6,1014.1 L1407.6,989.7 L1470.5,989.7 L1470.5,983.9 L1533.2,983.9 L1533.2,962.5 L1592.6,962.5 L1592.6,950.8 L1653.1,950.8 L1653.1,931.0 L1719.5,931.0 L1719.5,926.4 L1780.1,926.4 L1780.1,901.9 L1844.1,901.9 L1844.1,889.0 L1905.9,889.0 L1905.9,874.0 L1966.4,874.0 L1966.4,863.5 L2029.3,863.5 L2029.3,842.5 L2094.3,842.5 L2094.3,837.6 L2158.4,837.6 L2158.4,813.1 L2221.3,813.1 L2221.3,806.2 L2283.0,806.2 L2283.0,798.0 L2315.6,798.0 L2315.6,781.7 L2347.0,781.7 L2347.0,778.2 L2378.5,778.2 L2378.5,760.7 L2410.0,760.7 L2410.0,758.4 L2440.2,758.4 L2440.2,741.0 L2471.7,741.0 L2471.7,738.6 L2504.3,738.6 L2504.3,729.3 L2534.6,729.3 L2534.6,718.8 L2594.9,718.8 L2594.9,708.4 L2657.8,708.4 L2657.8,695.6 L2720.7,695.6 L2720.7,688.6 L2783.6,688.6 L2783.6,678.1 L2845.3,678.1 L2845.3,667.6 L2909.4,667.6 L2909.4,658.3 L2970.0,658.3 L2970.0,650.2 L3032.9,650.2 L3032.9,633.9 L3096.9,633.9 L3096.9,631.5 L3156.3,631.5 L3156.3,612.1 L3219.4,612.1 L3219.4,610.2 L3281.5,610.2 L3281.5,592.7 L3344.6,592.7 L3344.6,591.7 L3407.6,591.7 L3407.6,582.0 L3468.8,582.0 L3468.8,572.3 L3529.9,572.3 L3529.9,572.3 L3532.9,572.3" fill="none" stroke="#FFFF00" stroke-width="3.5" transform="translate(0,-1.8)"/>
<rect x="901.5" y="1121.9" width="12" height="15" rx="4" fill="#000" stroke="#FFFF00" stroke-width="2.5"/>
<rect x="965.5" y="1110.3" width="12" height="15" rx="4" fill="#000" stroke="#FFFF00" stroke-width="2.5"/>
<rect x="959.5" y="1123.1" width="12" height="15" rx="4" fill="#000" stroke="#FF0000" stroke-width="2.5"/>
<rect x="1028.4" y="1099.8" width="12" height="15" rx="4" fill="#000" stroke="#FFFF00" stroke-width="2.5"/>
<rect x="1022.4" y="1118.5" width="12" height="15" rx="4" fill="#000" stroke="#FF0000" stroke-width="2.5"/>
<rect x="1090.1" y="1089.3" width="12" height="15" rx="4" fill="#000" stroke="#FFFF00" stroke-width="2.5"/>
<rect x="1084.1" y="1109.1" width="12" height="15" rx="4" fill="#000" stroke="#FF0000" stroke-width="2.5"/>
<rect x="1151.9" y="1083.5" width="12" height="15" rx="4" fill="#000" stroke="#FFFF00" stroke-width="2.5"/>
<rect x="1145.9" y="1099.8" width="12" height="15" rx="4" fill="#000" stroke="#FF0000" stroke-width="2.5"/>
<rect x="1186.8" y="1069.5" width="12" height="15" rx="4" fill="#000" stroke="#FFFF00" stroke-width="2.5"/>
<rect x="1180.8" y="1078.9" width="12" height="15" rx="4" fill="#000" stroke="#FF0000" stroke-width="2.5"/>
<rect x="1218.2" y="1064.9" width="12" height="15" rx="4" fill="#000" stroke="#FFFF00" stroke-width="2.5"/>
<rect x="1212.2" y="1088.2" width="12" height="15" rx="4" fill="#000" stroke="#FF0000" stroke-width="2.5"/>
<rect x="1245.5" y="1048.5" width="12" height="15" rx="4" fill="#000" stroke="#FFFF00" stroke-width="2.5"/>
<rect x="1245.5" y="1063.7" width="12" height="15" rx="4" fill="#000" stroke="#FF0000" stroke-width="2.5"/>
<rect x="1245.5" y="1078.9" width="12" height="15" rx="4" fill="#000" stroke="#FF0000" stroke-width="2.5"/>
<rect x="1275.8" y="1032.3" width="12" height="15" rx="4" fill="#000" stroke="#FFFF00" stroke-width="2.5"/>
<rect x="1275.8" y="1051.5" width="12" height="15" rx="4" fill="#000" stroke="#FF0000" stroke-width="2.5"/>
<rect x="1275.8" y="1070.7" width="12" height="15" rx="4" fill="#000" stroke="#FF0000" stroke-width="2.5"/>
<rect x="1309.6" y="1022.9" width="12" height="15" rx="4" fill="#000" stroke="#FFFF00" stroke-width="2.5"/>
<rect x="1309.6" y="1041.0" width="12" height="15" rx="4" fill="#000" stroke="#FF0000" stroke-width="2.5"/>
<rect x="1309.6" y="1059.0" width="12" height="15" rx="4" fill="#000" stroke="#FF0000" stroke-width="2.5"/>
<rect x="1339.9" y="1018.3" width="12" height="15" rx="4" fill="#000" stroke="#FFFF00" stroke-width="2.5"/>
<rect x="1339.9" y="1034.6" width="12" height="15" rx="4" fill="#000" stroke="#FF0000" stroke-width="2.5"/>
<rect x="1339.9" y="1050.9" width="12" height="15" rx="4" fill="#000" stroke="#FF0000" stroke-width="2.5"/>
<rect x="1371.3" y="1006.6" width="12" height="15" rx="4" fill="#000" stroke="#FFFF00" stroke-width="2.5"/>
<rect x="1371.3" y="1023.5" width="12" height="15" rx="4" fill="#000" stroke="#FF0000" stroke-width="2.5"/>
<rect x="1371.3" y="1040.4" width="12" height="15" rx="4" fill="#000" stroke="#FF0000" stroke-width="2.5"/>
<rect x="1401.6" y="982.2" width="12" height="15" rx="4" fill="#000" stroke="#FFFF00" stroke-width="2.5"/>
<rect x="1401.6" y="998.1" width="12" height="15" rx="4" fill="#000" stroke="#FF0000" stroke-width="2.5"/>
<rect x="1401.6" y="1014.0" width="12" height="15" rx="4" fill="#000" stroke="#FF0000" stroke-width="2.5"/>
<rect x="1401.6" y="1029.9" width="12" height="15" rx="4" fill="#000" stroke="#FF0000" stroke-width="2.5"/>
<rect x="1433.0" y="1009.0" width="12" height="15" rx="4" fill="#000" stroke="#FF0000" stroke-width="2.5"/>
<rect x="1467.5" y="976.4" width="12" height="15" rx="4" fill="#000" stroke="#FFFF00" stroke-width="2.5"/>
<rect x="1461.5" y="999.7" width="12" height="15" rx="4" fill="#000" stroke="#FF0000" stroke-width="2.5"/>
<rect x="1530.2" y="955.0" width="12" height="15" rx="4" fill="#000" stroke="#FFFF00" stroke-width="2.5"/>
<rect x="1524.2" y="974.8" width="12" height="15" rx="4" fill="#000" stroke="#FF0000" stroke-width="2.5"/>
<rect x="1586.6" y="943.3" width="12" height="15" rx="4" fill="#000" stroke="#FFFF00" stroke-width="2.5"/>
<rect x="1586.6" y="959.0" width="12" height="15" rx="4" fill="#000" stroke="#FF0000" stroke-width="2.5"/>
<rect x="1586.6" y="974.8" width="12" height="15" rx="4" fill="#000" stroke="#FF0000" stroke-width="2.5"/>
<rect x="1647.1" y="923.5" width="12" height="15" rx="4" fill="#000" stroke="#FFFF00" stroke-width="2.5"/>
<rect x="1647.1" y="942.7" width="12" height="15" rx="4" fill="#000" stroke="#FF0000" stroke-width="2.5"/>
<rect x="1647.1" y="961.9" width="12" height="15" rx="4" fill="#000" stroke="#FF0000" stroke-width="2.5"/>
<rect x="1716.5" y="918.9" width="12" height="15" rx="4" fill="#000" stroke="#FFFF00" stroke-width="2.5"/>
<rect x="1710.5" y="941.0" width="12" height="15" rx="4" fill="#000" stroke="#FF0000" stroke-width="2.5"/>
<rect x="1774.1" y="894.4" width="12" height="15" rx="4" fill="#000" stroke="#FFFF00" stroke-width="2.5"/>
<rect x="1774.1" y="913.6" width="12" height="15" rx="4" fill="#000" stroke="#FF0000" stroke-width="2.5"/>
<rect x="1774.1" y="932.8" width="12" height="15" rx="4" fill="#000" stroke="#FF0000" stroke-width="2.5"/>
<rect x="1838.1" y="881.5" width="12" height="15" rx="4" fill="#000" stroke="#FFFF00" stroke-width="2.5"/>
<rect x="1838.1" y="897.2" width="12" height="15" rx="4" fill="#000" stroke="#FF0000" stroke-width="2.5"/>
<rect x="1838.1" y="913.0" width="12" height="15" rx="4" fill="#000" stroke="#FF0000" stroke-width="2.5"/>
<rect x="1899.9" y="866.5" width="12" height="15" rx="4" fill="#000" stroke="#FFFF00" stroke-width="2.5"/>
<rect x="1899.9" y="885.7" width="12" height="15" rx="4" fill="#000" stroke="#FF0000" stroke-width="2.5"/>
<rect x="1899.9" y="904.9" width="12" height="15" rx="4" fill="#000" stroke="#FF0000" stroke-width="2.5"/>
<rect x="1960.4" y="856.0" width="12" height="15" rx="4" fill="#000" stroke="#FFFF00" stroke-width="2.5"/>
<rect x="1960.4" y="871.1" width="12" height="15" rx="4" fill="#000" stroke="#FF0000" stroke-width="2.5"/>
<rect x="1960.4" y="886.2" width="12" height="15" rx="4" fill="#000" stroke="#FF0000" stroke-width="2.5"/>
<rect x="2023.3" y="835.0" width="12" height="15" rx="4" fill="#000" stroke="#FFFF00" stroke-width="2.5"/>
<rect x="2023.3" y="854.8" width="12" height="15" rx="4" fill="#000" stroke="#FF0000" stroke-width="2.5"/>
<rect x="2023.3" y="874.6" width="12" height="15" rx="4" fill="#000" stroke="#FF0000" stroke-width="2.5"/>
<rect x="2091.3" y="830.1" width="12" height="15" rx="4" fill="#000" stroke="#FFFF00" stroke-width="2.5"/>
<rect x="2085.3" y="839.5" width="12" height="15" rx="4" fill="#000" stroke="#FF0000" stroke-width="2.5"/>
<rect x="2152.4" y="805.6" width="12" height="15" rx="4" fill="#000" stroke="#FFFF00" stroke-width="2.5"/>
<rect x="2152.4" y="821.4" width="12" height="15" rx="4" fill="#000" stroke="#FF0000" stroke-width="2.5"/>
<rect x="2152.4" y="837.1" width="12" height="15" rx="4" fill="#000" stroke="#FF0000" stroke-width="2.5"/>
<rect x="2218.3" y="798.7" width="12" height="15" rx="4" fill="#000" stroke="#FFFF00" stroke-width="2.5"/>
<rect x="2212.3" y="823.1" width="12" height="15" rx="4" fill="#000" stroke="#FF0000" stroke-width="2.5"/>
<rect x="2280.0" y="790.5" width="12" height="15" rx="4" fill="#000" stroke="#FFFF00" stroke-width="2.5"/>
<rect x="2274.0" y="811.5" width="12" height="15" rx="4" fill="#000" stroke="#FF0000" stroke-width="2.5"/>
<rect x="2312.6" y="774.2" width="12" height="15" rx="4" fill="#000" stroke="#FFFF00" stroke-width="2.5"/>
<rect x="2306.6" y="782.3" width="12" height="15" rx="4" fill="#000" stroke="#FF0000" stroke-width="2.5"/>
<rect x="2344.0" y="770.7" width="12" height="15" rx="4" fill="#000" stroke="#FFFF00" stroke-width="2.5"/>
<rect x="2338.0" y="791.7" width="12" height="15" rx="4" fill="#000" stroke="#FF0000" stroke-width="2.5"/>
<rect x="2372.5" y="753.2" width="12" height="15" rx="4" fill="#000" stroke="#FFFF00" stroke-width="2.5"/>
<rect x="2372.5" y="767.8" width="12" height="15" rx="4" fill="#000" stroke="#FF0000" stroke-width="2.5"/>
<rect x="2372.5" y="782.3" width="12" height="15" rx="4" fill="#000" stroke="#FF0000" stroke-width="2.5"/>
<rect x="2407.0" y="750.9" width="12" height="15" rx="4" fill="#000" stroke="#FFFF00" stroke-width="2.5"/>
<rect x="2401.0" y="773.0" width="12" height="15" rx="4" fill="#000" stroke="#FF0000" stroke-width="2.5"/>
<rect x="2434.2" y="733.5" width="12" height="15" rx="4" fill="#000" stroke="#FFFF00" stroke-width="2.5"/>
<rect x="2434.2" y="748.6" width="12" height="15" rx="4" fill="#000" stroke="#FF0000" stroke-width="2.5"/>
<rect x="2434.2" y="763.7" width="12" height="15" rx="4" fill="#000" stroke="#FF0000" stroke-width="2.5"/>
<rect x="2468.7" y="731.1" width="12" height="15" rx="4" fill="#000" stroke="#FFFF00" stroke-width="2.5"/>
<rect x="2462.7" y="753.2" width="12" height="15" rx="4" fill="#000" stroke="#FF0000" stroke-width="2.5"/>
<rect x="2501.3" y="721.8" width="12" height="15" rx="4" fill="#000" stroke="#FFFF00" stroke-width="2.5"/>
<rect x="2495.3" y="742.7" width="12" height="15" rx="4" fill="#000" stroke="#FF0000" stroke-width="2.5"/>
<rect x="2531.6" y="711.3" width="12" height="15" rx="4" fill="#000" stroke="#FFFF00" stroke-width="2.5"/>
<rect x="2525.6" y="733.5" width="12" height="15" rx="4" fill="#000" stroke="#FF0000" stroke-width="2.5"/>
<rect x="2560.0" y="722.9" width="12" height="15" rx="4" fill="#000" stroke="#FF0000" stroke-width="2.5"/>
<rect x="2591.9" y="700.9" width="12" height="15" rx="4" fill="#000" stroke="#FFFF00" stroke-width="2.5"/>
<rect x="2585.9" y="714.9" width="12" height="15" rx="4" fill="#000" stroke="#FF0000" stroke-width="2.5"/>
<rect x="2654.8" y="688.1" width="12" height="15" rx="4" fill="#000" stroke="#FFFF00" stroke-width="2.5"/>
<rect x="2648.8" y="703.2" width="12" height="15" rx="4" fill="#000" stroke="#FF0000" stroke-width="2.5"/>
<rect x="2717.7" y="681.1" width="12" height="15" rx="4" fill="#000" stroke="#FFFF00" stroke-width="2.5"/>
<rect x="2711.7" y="696.2" width="12" height="15" rx="4" fill="#000" stroke="#FF0000" stroke-width="2.5"/>
<rect x="2780.6" y="670.6" width="12" height="15" rx="4" fill="#000" stroke="#FFFF00" stroke-width="2.5"/>
<rect x="2774.6" y="684.6" width="12" height="15" rx="4" fill="#000" stroke="#FF0000" stroke-width="2.5"/>
<rect x="2842.3" y="660.1" width="12" height="15" rx="4" fill="#000" stroke="#FFFF00" stroke-width="2.5"/>
<rect x="2836.3" y="675.3" width="12" height="15" rx="4" fill="#000" stroke="#FF0000" stroke-width="2.5"/>
<rect x="2906.4" y="650.8" width="12" height="15" rx="4" fill="#000" stroke="#FFFF00" stroke-width="2.5"/>
<rect x="2900.4" y="664.8" width="12" height="15" rx="4" fill="#000" stroke="#FF0000" stroke-width="2.5"/>
<rect x="2967.0" y="642.7" width="12" height="15" rx="4" fill="#000" stroke="#FFFF00" stroke-width="2.5"/>
<rect x="2961.0" y="656.6" width="12" height="15" rx="4" fill="#000" stroke="#FF0000" stroke-width="2.5"/>
<rect x="3029.9" y="626.4" width="12" height="15" rx="4" fill="#000" stroke="#FFFF00" stroke-width="2.5"/>
<rect x="3023.9" y="646.2" width="12" height="15" rx="4" fill="#000" stroke="#FF0000" stroke-width="2.5"/>
<rect x="3093.9" y="624.0" width="12" height="15" rx="4" fill="#000" stroke="#FFFF00" stroke-width="2.5"/>
<rect x="3087.9" y="635.7" width="12" height="15" rx="4" fill="#000" stroke="#FF0000" stroke-width="2.5"/>
<rect x="3153.3" y="604.6" width="12" height="15" rx="4" fill="#000" stroke="#FFFF00" stroke-width="2.5"/>
<rect x="3147.3" y="626.0" width="12" height="15" rx="4" fill="#000" stroke="#FF0000" stroke-width="2.5"/>
<rect x="3216.4" y="602.7" width="12" height="15" rx="4" fill="#000" stroke="#FFFF00" stroke-width="2.5"/>
<rect x="3210.4" y="616.3" width="12" height="15" rx="4" fill="#000" stroke="#FF0000" stroke-width="2.5"/>
<rect x="3278.5" y="585.2" width="12" height="15" rx="4" fill="#000" stroke="#FFFF00" stroke-width="2.5"/>
<rect x="3272.5" y="606.5" width="12" height="15" rx="4" fill="#000" stroke="#FF0000" stroke-width="2.5"/>
<rect x="3341.6" y="584.2" width="12" height="15" rx="4" fill="#000" stroke="#FFFF00" stroke-width="2.5"/>
<rect x="3335.6" y="596.8" width="12" height="15" rx="4" fill="#000" stroke="#FF0000" stroke-width="2.5"/>
<rect x="3404.6" y="574.5" width="12" height="15" rx="4" fill="#000" stroke="#FFFF00" stroke-width="2.5"/>
<rect x="3398.6" y="586.2" width="12" height="15" rx="4" fill="#000" stroke="#FF0000" stroke-width="2.5"/>
<rect x="3465.8" y="564.8" width="12" height="15" rx="4" fill="#000" stroke="#FFFF00" stroke-width="2.5"/>
<rect x="3459.8" y="577.5" width="12" height="15" rx="4" fill="#000" stroke="#FF0000" stroke-width="2.5"/>
<rect x="3523.9" y="564.8" width="12" height="15" rx="4" fill="#000" stroke="#FF0000" stroke-width="2.5"/>
<rect x="679.0" y="1299.0" width="3005.0" height="499.4" fill="#FFFFFF"/>
<rect x="679.0" y="1299.0" width="2999.0" height="491.0" fill="#808080"/>
<rect x="682.4" y="1302.4" width="2995.6" height="487.6" fill="#000000"/>
<rect x="691.0" y="1310.0" width="1485.0" height="57.0" fill="#D4D0C8"/>
<rect x="691.0" y="1310.0" width="1485.0" height="3.5" fill="#FFFFFF"/>
<rect x="691.0" y="1310.0" width="3.5" height="57.0" fill="#FFFFFF"/>
<text transform="translate(1298.87,1358.00) scale(0.8964,1)" font-size="47.97" font-weight="normal" fill="#000" >EASTBOUND</text>
<rect x="691.0" y="1367.0" width="1485.0" height="3.5" fill="#000000"/>
<rect x="691.0" y="1370.5" width="1485.0" height="412.5" fill="#D4D0C8"/>
<rect x="691.0" y="1370.5" width="73.3" height="51.1" fill="#D4D0C8"/>
<rect x="691.0" y="1370.5" width="73.3" height="3.5" fill="#FFFFFF"/>
<rect x="691.0" y="1370.5" width="3.5" height="51.1" fill="#FFFFFF"/>
<rect x="764.3" y="1370.5" width="3.3" height="54.5" fill="#000000"/>
<rect x="767.6" y="1370.5" width="252.6" height="51.1" fill="#D4D0C8"/>
<rect x="767.6" y="1370.5" width="252.6" height="3.5" fill="#FFFFFF"/>
<rect x="767.6" y="1370.5" width="3.5" height="51.1" fill="#FFFFFF"/>
<text transform="translate(774.59,1414.20) scale(0.8160,1)" font-size="50.87" font-weight="normal" fill="#000" >From</text>
<rect x="1020.2" y="1370.5" width="3.3" height="54.5" fill="#000000"/>
<rect x="1023.5" y="1370.5" width="133.5" height="51.1" fill="#D4D0C8"/>
<rect x="1023.5" y="1370.5" width="133.5" height="3.5" fill="#FFFFFF"/>
<rect x="1023.5" y="1370.5" width="3.5" height="51.1" fill="#FFFFFF"/>
<text transform="translate(1034.28,1414.20) scale(0.8044,1)" font-size="50.87" font-weight="normal" fill="#000" >Time</text>
<rect x="1157.0" y="1370.5" width="3.3" height="54.5" fill="#000000"/>
<rect x="1160.3" y="1370.5" width="132.0" height="51.1" fill="#D4D0C8"/>
<rect x="1160.3" y="1370.5" width="132.0" height="3.5" fill="#FFFFFF"/>
<rect x="1160.3" y="1370.5" width="3.5" height="51.1" fill="#FFFFFF"/>
<text transform="translate(1169.67,1414.20) scale(0.8154,1)" font-size="50.87" font-weight="normal" fill="#000" >Time</text>
<rect x="1292.3" y="1370.5" width="3.3" height="54.5" fill="#000000"/>
<rect x="1295.6" y="1370.5" width="253.4" height="51.1" fill="#D4D0C8"/>
<rect x="1295.6" y="1370.5" width="253.4" height="3.5" fill="#FFFFFF"/>
<rect x="1295.6" y="1370.5" width="3.5" height="51.1" fill="#FFFFFF"/>
<text transform="translate(1305.27,1414.20) scale(0.9004,1)" font-size="50.87" font-weight="normal" fill="#000" >To</text>
<rect x="1549.0" y="1370.5" width="3.3" height="54.5" fill="#000000"/>
<rect x="691.0" y="1421.6" width="861.3" height="3.4" fill="#000000"/>
<rect x="691.0" y="1425.0" width="73.3" height="56.7" fill="#D4D0C8"/>
<rect x="691.0" y="1425.0" width="73.3" height="3.5" fill="#FFFFFF"/>
<rect x="691.0" y="1425.0" width="3.5" height="56.7" fill="#FFFFFF"/>
<rect x="691.0" y="1481.7" width="76.6" height="3.0" fill="#000000"/>
<rect x="764.3" y="1425.0" width="3.3" height="59.7" fill="#000000"/>
<polygon points="720.0,1434.0 744.5,1456.0 720.0,1479.0" fill="#000"/>
<rect x="767.6" y="1425.0" width="252.6" height="59.7" fill="#FFFFFF"/>
<rect x="767.6" y="1481.7" width="255.9" height="3.0" fill="#808080"/>
<rect x="1020.2" y="1425.0" width="3.3" height="59.7" fill="#808080"/>
<text transform="translate(774.62,1470.00) scale(0.8570,1)" font-size="50.87" font-weight="normal" fill="#000" >LVMN</text>
<rect x="1023.5" y="1425.0" width="133.5" height="59.7" fill="#FFFFFF"/>
<rect x="1023.5" y="1481.7" width="136.8" height="3.0" fill="#808080"/>
<rect x="1157.0" y="1425.0" width="3.3" height="59.7" fill="#808080"/>
<text transform="translate(1044.57,1470.00) scale(0.8496,1)" font-size="50.87" font-weight="normal" fill="#000" >5:00</text>
<rect x="1160.3" y="1425.0" width="132.0" height="59.7" fill="#FFFFFF"/>
<rect x="1160.3" y="1481.7" width="135.3" height="3.0" fill="#808080"/>
<rect x="1292.3" y="1425.0" width="3.3" height="59.7" fill="#808080"/>
<text transform="translate(1180.61,1470.00) scale(0.8547,1)" font-size="50.87" font-weight="normal" fill="#000" >5:27</text>
<rect x="1295.6" y="1425.0" width="253.4" height="59.7" fill="#FFFFFF"/>
<rect x="1295.6" y="1481.7" width="256.7" height="3.0" fill="#808080"/>
<rect x="1549.0" y="1425.0" width="3.3" height="59.7" fill="#808080"/>
<text transform="translate(1303.71,1470.00) scale(0.8444,1)" font-size="50.87" font-weight="normal" fill="#000" >VREM</text>
<rect x="769.1" y="1428.0" width="249.6" height="53.7" fill="none" stroke="#000" stroke-width="4"/>
<rect x="691.0" y="1484.7" width="73.3" height="56.7" fill="#D4D0C8"/>
<rect x="691.0" y="1484.7" width="73.3" height="3.5" fill="#FFFFFF"/>
<rect x="691.0" y="1484.7" width="3.5" height="56.7" fill="#FFFFFF"/>
<rect x="691.0" y="1541.4" width="76.6" height="3.0" fill="#000000"/>
<rect x="764.3" y="1484.7" width="3.3" height="59.7" fill="#000000"/>
<rect x="767.6" y="1484.7" width="252.6" height="59.7" fill="#FFFFFF"/>
<rect x="767.6" y="1541.4" width="255.9" height="3.0" fill="#808080"/>
<rect x="1020.2" y="1484.7" width="3.3" height="59.7" fill="#808080"/>
<text transform="translate(774.62,1529.70) scale(0.8570,1)" font-size="50.87" font-weight="normal" fill="#000" >LVMN</text>
<rect x="1023.5" y="1484.7" width="133.5" height="59.7" fill="#FFFFFF"/>
<rect x="1023.5" y="1541.4" width="136.8" height="3.0" fill="#808080"/>
<rect x="1157.0" y="1484.7" width="3.3" height="59.7" fill="#808080"/>
<text transform="translate(1044.57,1529.70) scale(0.8496,1)" font-size="50.87" font-weight="normal" fill="#000" >5:30</text>
<rect x="1160.3" y="1484.7" width="132.0" height="59.7" fill="#FFFFFF"/>
<rect x="1160.3" y="1541.4" width="135.3" height="3.0" fill="#808080"/>
<rect x="1292.3" y="1484.7" width="3.3" height="59.7" fill="#808080"/>
<text transform="translate(1180.61,1529.70) scale(0.8547,1)" font-size="50.87" font-weight="normal" fill="#000" >5:57</text>
<rect x="1295.6" y="1484.7" width="253.4" height="59.7" fill="#FFFFFF"/>
<rect x="1295.6" y="1541.4" width="256.7" height="3.0" fill="#808080"/>
<rect x="1549.0" y="1484.7" width="3.3" height="59.7" fill="#808080"/>
<text transform="translate(1303.71,1529.70) scale(0.8444,1)" font-size="50.87" font-weight="normal" fill="#000" >VREM</text>
<rect x="691.0" y="1544.4" width="73.3" height="56.7" fill="#D4D0C8"/>
<rect x="691.0" y="1544.4" width="73.3" height="3.5" fill="#FFFFFF"/>
<rect x="691.0" y="1544.4" width="3.5" height="56.7" fill="#FFFFFF"/>
<rect x="691.0" y="1601.1" width="76.6" height="3.0" fill="#000000"/>
<rect x="764.3" y="1544.4" width="3.3" height="59.7" fill="#000000"/>
<rect x="767.6" y="1544.4" width="252.6" height="59.7" fill="#FFFFFF"/>
<rect x="767.6" y="1601.1" width="255.9" height="3.0" fill="#808080"/>
<rect x="1020.2" y="1544.4" width="3.3" height="59.7" fill="#808080"/>
<text transform="translate(774.62,1589.40) scale(0.8570,1)" font-size="50.87" font-weight="normal" fill="#000" >LVMN</text>
<rect x="1023.5" y="1544.4" width="133.5" height="59.7" fill="#FFFFFF"/>
<rect x="1023.5" y="1601.1" width="136.8" height="3.0" fill="#808080"/>
<rect x="1157.0" y="1544.4" width="3.3" height="59.7" fill="#808080"/>
<text transform="translate(1044.09,1589.40) scale(0.8545,1)" font-size="50.87" font-weight="normal" fill="#000" >6:00</text>
<rect x="1160.3" y="1544.4" width="132.0" height="59.7" fill="#FFFFFF"/>
<rect x="1160.3" y="1601.1" width="135.3" height="3.0" fill="#808080"/>
<rect x="1292.3" y="1544.4" width="3.3" height="59.7" fill="#808080"/>
<text transform="translate(1180.13,1589.40) scale(0.8597,1)" font-size="50.87" font-weight="normal" fill="#000" >6:27</text>
<rect x="1295.6" y="1544.4" width="253.4" height="59.7" fill="#FFFFFF"/>
<rect x="1295.6" y="1601.1" width="256.7" height="3.0" fill="#808080"/>
<rect x="1549.0" y="1544.4" width="3.3" height="59.7" fill="#808080"/>
<text transform="translate(1303.71,1589.40) scale(0.8444,1)" font-size="50.87" font-weight="normal" fill="#000" >VREM</text>
<rect x="691.0" y="1604.1" width="73.3" height="56.7" fill="#D4D0C8"/>
<rect x="691.0" y="1604.1" width="73.3" height="3.5" fill="#FFFFFF"/>
<rect x="691.0" y="1604.1" width="3.5" height="56.7" fill="#FFFFFF"/>
<rect x="691.0" y="1660.8" width="76.6" height="3.0" fill="#000000"/>
<rect x="764.3" y="1604.1" width="3.3" height="59.7" fill="#000000"/>
<rect x="767.6" y="1604.1" width="252.6" height="59.7" fill="#FFFFFF"/>
<rect x="767.6" y="1660.8" width="255.9" height="3.0" fill="#808080"/>
<rect x="1020.2" y="1604.1" width="3.3" height="59.7" fill="#808080"/>
<text transform="translate(774.62,1649.10) scale(0.8570,1)" font-size="50.87" font-weight="normal" fill="#000" >LVMN</text>
<rect x="1023.5" y="1604.1" width="133.5" height="59.7" fill="#FFFFFF"/>
<rect x="1023.5" y="1660.8" width="136.8" height="3.0" fill="#808080"/>
<rect x="1157.0" y="1604.1" width="3.3" height="59.7" fill="#808080"/>
<text transform="translate(1044.09,1649.10) scale(0.8545,1)" font-size="50.87" font-weight="normal" fill="#000" >6:30</text>
<rect x="1160.3" y="1604.1" width="132.0" height="59.7" fill="#FFFFFF"/>
<rect x="1160.3" y="1660.8" width="135.3" height="3.0" fill="#808080"/>
<rect x="1292.3" y="1604.1" width="3.3" height="59.7" fill="#808080"/>
<text transform="translate(1180.13,1649.10) scale(0.8597,1)" font-size="50.87" font-weight="normal" fill="#000" >6:57</text>
<rect x="1295.6" y="1604.1" width="253.4" height="59.7" fill="#FFFFFF"/>
<rect x="1295.6" y="1660.8" width="256.7" height="3.0" fill="#808080"/>
<rect x="1549.0" y="1604.1" width="3.3" height="59.7" fill="#808080"/>
<text transform="translate(1303.71,1649.10) scale(0.8444,1)" font-size="50.87" font-weight="normal" fill="#000" >VREM</text>
<rect x="691.0" y="1663.8" width="73.3" height="56.7" fill="#D4D0C8"/>
<rect x="691.0" y="1663.8" width="73.3" height="3.5" fill="#FFFFFF"/>
<rect x="691.0" y="1663.8" width="3.5" height="56.7" fill="#FFFFFF"/>
<rect x="691.0" y="1720.5" width="76.6" height="3.0" fill="#000000"/>
<rect x="764.3" y="1663.8" width="3.3" height="59.7" fill="#000000"/>
<rect x="767.6" y="1663.8" width="252.6" height="59.7" fill="#FFFFFF"/>
<rect x="767.6" y="1720.5" width="255.9" height="3.0" fill="#808080"/>
<rect x="1020.2" y="1663.8" width="3.3" height="59.7" fill="#808080"/>
<text transform="translate(774.62,1708.80) scale(0.8570,1)" font-size="50.87" font-weight="normal" fill="#000" >LVMN</text>
<rect x="1023.5" y="1663.8" width="133.5" height="59.7" fill="#FFFFFF"/>
<rect x="1023.5" y="1720.5" width="136.8" height="3.0" fill="#808080"/>
<rect x="1157.0" y="1663.8" width="3.3" height="59.7" fill="#808080"/>
<text transform="translate(1044.07,1708.80) scale(0.8547,1)" font-size="50.87" font-weight="normal" fill="#000" >7:00</text>
<rect x="1160.3" y="1663.8" width="132.0" height="59.7" fill="#FFFFFF"/>
<rect x="1160.3" y="1720.5" width="135.3" height="3.0" fill="#808080"/>
<rect x="1292.3" y="1663.8" width="3.3" height="59.7" fill="#808080"/>
<text transform="translate(1180.12,1708.80) scale(0.8547,1)" font-size="50.87" font-weight="normal" fill="#000" >7:30</text>
<rect x="1295.6" y="1663.8" width="253.4" height="59.7" fill="#FFFFFF"/>
<rect x="1295.6" y="1720.5" width="256.7" height="3.0" fill="#808080"/>
<rect x="1549.0" y="1663.8" width="3.3" height="59.7" fill="#808080"/>
<text transform="translate(1303.71,1708.80) scale(0.8444,1)" font-size="50.87" font-weight="normal" fill="#000" >VREM</text>
<rect x="691.0" y="1723.5" width="73.3" height="56.7" fill="#D4D0C8"/>
<rect x="691.0" y="1723.5" width="73.3" height="3.5" fill="#FFFFFF"/>
<rect x="691.0" y="1723.5" width="3.5" height="56.7" fill="#FFFFFF"/>
<rect x="691.0" y="1780.2" width="76.6" height="3.0" fill="#000000"/>
<rect x="764.3" y="1723.5" width="3.3" height="59.7" fill="#000000"/>
<rect x="767.6" y="1723.5" width="252.6" height="59.7" fill="#FFFFFF"/>
<rect x="1020.2" y="1723.5" width="3.3" height="59.7" fill="#808080"/>
<text transform="translate(774.62,1768.50) scale(0.8570,1)" font-size="50.87" font-weight="normal" fill="#000" >LVMN</text>
<rect x="1023.5" y="1723.5" width="133.5" height="59.7" fill="#FFFFFF"/>
<rect x="1157.0" y="1723.5" width="3.3" height="59.7" fill="#808080"/>
<text transform="translate(1044.07,1768.50) scale(0.8561,1)" font-size="50.87" font-weight="normal" fill="#000" >7:15</text>
<rect x="1160.3" y="1723.5" width="132.0" height="59.7" fill="#FFFFFF"/>
<rect x="1292.3" y="1723.5" width="3.3" height="59.7" fill="#808080"/>
<text transform="translate(1180.12,1768.50) scale(0.8561,1)" font-size="50.87" font-weight="normal" fill="#000" >7:45</text>
<rect x="1295.6" y="1723.5" width="253.4" height="59.7" fill="#FFFFFF"/>
<rect x="1549.0" y="1723.5" width="3.3" height="59.7" fill="#808080"/>
<text transform="translate(1303.71,1768.50) scale(0.8444,1)" font-size="50.87" font-weight="normal" fill="#000" >VREM</text>
<rect x="2115.7" y="1375.4" width="58.3" height="407.6" fill="url(#chk)"/>
<rect x="2115.7" y="1375.4" width="58.3" height="58.2" fill="#404040"/>
<rect x="2115.7" y="1375.4" width="54.4" height="54.3" fill="#D4D0C8"/>
<rect x="2119.6" y="1379.3" width="50.5" height="50.4" fill="#808080"/>
<rect x="2119.6" y="1379.3" width="46.6" height="46.5" fill="#FFFFFF"/>
<rect x="2123.5" y="1383.2" width="42.7" height="42.6" fill="#D4D0C8"/>
<polygon points="2130.3,1410.5 2159.3,1410.5 2144.8,1397.0" fill="#000"/>
<rect x="2115.7" y="1726.7" width="58.3" height="56.3" fill="#404040"/>
<rect x="2115.7" y="1726.7" width="54.4" height="52.4" fill="#D4D0C8"/>
<rect x="2119.6" y="1730.6" width="50.5" height="48.5" fill="#808080"/>
<rect x="2119.6" y="1730.6" width="46.6" height="44.6" fill="#FFFFFF"/>
<rect x="2123.5" y="1734.5" width="42.7" height="40.7" fill="#D4D0C8"/>
<polygon points="2129.8,1746.0 2159.8,1746.0 2144.8,1761.0" fill="#000"/>
<rect x="2115.7" y="1433.6" width="58.3" height="64.2" fill="#404040"/>
<rect x="2115.7" y="1433.6" width="54.4" height="60.3" fill="#D4D0C8"/>
<rect x="2119.6" y="1437.5" width="50.5" height="56.4" fill="#808080"/>
<rect x="2119.6" y="1437.5" width="46.6" height="52.5" fill="#FFFFFF"/>
<rect x="2123.5" y="1441.4" width="42.7" height="48.6" fill="#D4D0C8"/>
<rect x="2176.0" y="1302.4" width="7.0" height="487.6" fill="#000000"/>
<rect x="2183.0" y="1310.0" width="1489.0" height="57.0" fill="#D4D0C8"/>
<rect x="2183.0" y="1310.0" width="1489.0" height="3.5" fill="#FFFFFF"/>
<rect x="2183.0" y="1310.0" width="3.5" height="57.0" fill="#FFFFFF"/>
<text transform="translate(2788.41,1358.00) scale(0.9034,1)" font-size="47.97" font-weight="normal" fill="#000" >WESTBOUND</text>
<rect x="2183.0" y="1367.0" width="1489.0" height="3.5" fill="#000000"/>
<rect x="2183.0" y="1370.5" width="1489.0" height="412.5" fill="#D4D0C8"/>
<rect x="2183.0" y="1370.5" width="74.0" height="51.1" fill="#D4D0C8"/>
<rect x="2183.0" y="1370.5" width="74.0" height="3.5" fill="#FFFFFF"/>
<rect x="2183.0" y="1370.5" width="3.5" height="51.1" fill="#FFFFFF"/>
<rect x="2257.0" y="1370.5" width="3.3" height="54.5" fill="#000000"/>
<rect x="2260.3" y="1370.5" width="252.7" height="51.1" fill="#D4D0C8"/>
<rect x="2260.3" y="1370.5" width="252.7" height="3.5" fill="#FFFFFF"/>
<rect x="2260.3" y="1370.5" width="3.5" height="51.1" fill="#FFFFFF"/>
<text transform="translate(2266.87,1414.20) scale(0.8213,1)" font-size="50.87" font-weight="normal" fill="#000" >From</text>
<rect x="2513.0" y="1370.5" width="3.3" height="54.5" fill="#000000"/>
<rect x="2516.3" y="1370.5" width="132.7" height="51.1" fill="#D4D0C8"/>
<rect x="2516.3" y="1370.5" width="132.7" height="3.5" fill="#FFFFFF"/>
<rect x="2516.3" y="1370.5" width="3.5" height="51.1" fill="#FFFFFF"/>
<text transform="translate(2527.59,1414.20) scale(0.7962,1)" font-size="50.87" font-weight="normal" fill="#000" >Time</text>
<rect x="2649.0" y="1370.5" width="3.3" height="54.5" fill="#000000"/>
<rect x="2652.3" y="1370.5" width="132.7" height="51.1" fill="#D4D0C8"/>
<rect x="2652.3" y="1370.5" width="132.7" height="3.5" fill="#FFFFFF"/>
<rect x="2652.3" y="1370.5" width="3.5" height="51.1" fill="#FFFFFF"/>
<text transform="translate(2663.48,1414.20) scale(0.8035,1)" font-size="50.87" font-weight="normal" fill="#000" >Time</text>
<rect x="2785.0" y="1370.5" width="3.3" height="54.5" fill="#000000"/>
<rect x="2788.3" y="1370.5" width="252.7" height="51.1" fill="#D4D0C8"/>
<rect x="2788.3" y="1370.5" width="252.7" height="3.5" fill="#FFFFFF"/>
<rect x="2788.3" y="1370.5" width="3.5" height="51.1" fill="#FFFFFF"/>
<text transform="translate(2797.27,1414.20) scale(0.9004,1)" font-size="50.87" font-weight="normal" fill="#000" >To</text>
<rect x="3041.0" y="1370.5" width="3.3" height="54.5" fill="#000000"/>
<rect x="2183.0" y="1421.6" width="861.3" height="3.4" fill="#000000"/>
<rect x="2183.0" y="1425.0" width="74.0" height="56.7" fill="#D4D0C8"/>
<rect x="2183.0" y="1425.0" width="74.0" height="3.5" fill="#FFFFFF"/>
<rect x="2183.0" y="1425.0" width="3.5" height="56.7" fill="#FFFFFF"/>
<rect x="2183.0" y="1481.7" width="77.3" height="3.0" fill="#000000"/>
<rect x="2257.0" y="1425.0" width="3.3" height="59.7" fill="#000000"/>
<rect x="2260.3" y="1425.0" width="252.7" height="59.7" fill="#FFFFFF"/>
<rect x="2260.3" y="1481.7" width="256.0" height="3.0" fill="#808080"/>
<rect x="2513.0" y="1425.0" width="3.3" height="59.7" fill="#808080"/>
<text transform="translate(2268.41,1470.00) scale(0.8444,1)" font-size="50.87" font-weight="normal" fill="#000" >VREM</text>
<rect x="2516.3" y="1425.0" width="132.7" height="59.7" fill="#FFFFFF"/>
<rect x="2516.3" y="1481.7" width="136.0" height="3.0" fill="#808080"/>
<rect x="2649.0" y="1425.0" width="3.3" height="59.7" fill="#808080"/>
<text transform="translate(2536.49,1470.00) scale(0.8545,1)" font-size="50.87" font-weight="normal" fill="#000" >6:00</text>
<rect x="2652.3" y="1425.0" width="132.7" height="59.7" fill="#FFFFFF"/>
<rect x="2652.3" y="1481.7" width="136.0" height="3.0" fill="#808080"/>
<rect x="2785.0" y="1425.0" width="3.3" height="59.7" fill="#808080"/>
<text transform="translate(2672.48,1470.00) scale(0.8597,1)" font-size="50.87" font-weight="normal" fill="#000" >6:27</text>
<rect x="2788.3" y="1425.0" width="252.7" height="59.7" fill="#FFFFFF"/>
<rect x="2788.3" y="1481.7" width="256.0" height="3.0" fill="#808080"/>
<rect x="3041.0" y="1425.0" width="3.3" height="59.7" fill="#808080"/>
<text transform="translate(2795.32,1470.00) scale(0.8570,1)" font-size="50.87" font-weight="normal" fill="#000" >LVMN</text>
<rect x="2183.0" y="1484.7" width="74.0" height="56.7" fill="#D4D0C8"/>
<rect x="2183.0" y="1484.7" width="74.0" height="3.5" fill="#FFFFFF"/>
<rect x="2183.0" y="1484.7" width="3.5" height="56.7" fill="#FFFFFF"/>
<rect x="2183.0" y="1541.4" width="77.3" height="3.0" fill="#000000"/>
<rect x="2257.0" y="1484.7" width="3.3" height="59.7" fill="#000000"/>
<rect x="2260.3" y="1484.7" width="252.7" height="59.7" fill="#FFFFFF"/>
<rect x="2260.3" y="1541.4" width="256.0" height="3.0" fill="#808080"/>
<rect x="2513.0" y="1484.7" width="3.3" height="59.7" fill="#808080"/>
<text transform="translate(2268.41,1529.70) scale(0.8444,1)" font-size="50.87" font-weight="normal" fill="#000" >VREM</text>
<rect x="2516.3" y="1484.7" width="132.7" height="59.7" fill="#FFFFFF"/>
<rect x="2516.3" y="1541.4" width="136.0" height="3.0" fill="#808080"/>
<rect x="2649.0" y="1484.7" width="3.3" height="59.7" fill="#808080"/>
<text transform="translate(2536.49,1529.70) scale(0.8545,1)" font-size="50.87" font-weight="normal" fill="#000" >6:30</text>
<rect x="2652.3" y="1484.7" width="132.7" height="59.7" fill="#FFFFFF"/>
<rect x="2652.3" y="1541.4" width="136.0" height="3.0" fill="#808080"/>
<rect x="2785.0" y="1484.7" width="3.3" height="59.7" fill="#808080"/>
<text transform="translate(2672.48,1529.70) scale(0.8597,1)" font-size="50.87" font-weight="normal" fill="#000" >6:57</text>
<rect x="2788.3" y="1484.7" width="252.7" height="59.7" fill="#FFFFFF"/>
<rect x="2788.3" y="1541.4" width="256.0" height="3.0" fill="#808080"/>
<rect x="3041.0" y="1484.7" width="3.3" height="59.7" fill="#808080"/>
<text transform="translate(2795.32,1529.70) scale(0.8570,1)" font-size="50.87" font-weight="normal" fill="#000" >LVMN</text>
<rect x="2183.0" y="1544.4" width="74.0" height="56.7" fill="#D4D0C8"/>
<rect x="2183.0" y="1544.4" width="74.0" height="3.5" fill="#FFFFFF"/>
<rect x="2183.0" y="1544.4" width="3.5" height="56.7" fill="#FFFFFF"/>
<rect x="2183.0" y="1601.1" width="77.3" height="3.0" fill="#000000"/>
<rect x="2257.0" y="1544.4" width="3.3" height="59.7" fill="#000000"/>
<rect x="2260.3" y="1544.4" width="252.7" height="59.7" fill="#FFFFFF"/>
<rect x="2260.3" y="1601.1" width="256.0" height="3.0" fill="#808080"/>
<rect x="2513.0" y="1544.4" width="3.3" height="59.7" fill="#808080"/>
<text transform="translate(2268.41,1589.40) scale(0.8444,1)" font-size="50.87" font-weight="normal" fill="#000" >VREM</text>
<rect x="2516.3" y="1544.4" width="132.7" height="59.7" fill="#FFFFFF"/>
<rect x="2516.3" y="1601.1" width="136.0" height="3.0" fill="#808080"/>
<rect x="2649.0" y="1544.4" width="3.3" height="59.7" fill="#808080"/>
<text transform="translate(2536.47,1589.40) scale(0.8547,1)" font-size="50.87" font-weight="normal" fill="#000" >7:00</text>
<rect x="2652.3" y="1544.4" width="132.7" height="59.7" fill="#FFFFFF"/>
<rect x="2652.3" y="1601.1" width="136.0" height="3.0" fill="#808080"/>
<rect x="2785.0" y="1544.4" width="3.3" height="59.7" fill="#808080"/>
<text transform="translate(2672.47,1589.40) scale(0.8547,1)" font-size="50.87" font-weight="normal" fill="#000" >7:30</text>
<rect x="2788.3" y="1544.4" width="252.7" height="59.7" fill="#FFFFFF"/>
<rect x="2788.3" y="1601.1" width="256.0" height="3.0" fill="#808080"/>
<rect x="3041.0" y="1544.4" width="3.3" height="59.7" fill="#808080"/>
<text transform="translate(2795.32,1589.40) scale(0.8570,1)" font-size="50.87" font-weight="normal" fill="#000" >LVMN</text>
<rect x="2183.0" y="1604.1" width="74.0" height="56.7" fill="#D4D0C8"/>
<rect x="2183.0" y="1604.1" width="74.0" height="3.5" fill="#FFFFFF"/>
<rect x="2183.0" y="1604.1" width="3.5" height="56.7" fill="#FFFFFF"/>
<rect x="2183.0" y="1660.8" width="77.3" height="3.0" fill="#000000"/>
<rect x="2257.0" y="1604.1" width="3.3" height="59.7" fill="#000000"/>
<rect x="2260.3" y="1604.1" width="252.7" height="59.7" fill="#FFFFFF"/>
<rect x="2260.3" y="1660.8" width="256.0" height="3.0" fill="#808080"/>
<rect x="2513.0" y="1604.1" width="3.3" height="59.7" fill="#808080"/>
<text transform="translate(2268.41,1649.10) scale(0.8444,1)" font-size="50.87" font-weight="normal" fill="#000" >VREM</text>
<rect x="2516.3" y="1604.1" width="132.7" height="59.7" fill="#FFFFFF"/>
<rect x="2516.3" y="1660.8" width="136.0" height="3.0" fill="#808080"/>
<rect x="2649.0" y="1604.1" width="3.3" height="59.7" fill="#808080"/>
<text transform="translate(2536.47,1649.10) scale(0.8561,1)" font-size="50.87" font-weight="normal" fill="#000" >7:15</text>
<rect x="2652.3" y="1604.1" width="132.7" height="59.7" fill="#FFFFFF"/>
<rect x="2652.3" y="1660.8" width="136.0" height="3.0" fill="#808080"/>
<rect x="2785.0" y="1604.1" width="3.3" height="59.7" fill="#808080"/>
<text transform="translate(2672.47,1649.10) scale(0.8561,1)" font-size="50.87" font-weight="normal" fill="#000" >7:45</text>
<rect x="2788.3" y="1604.1" width="252.7" height="59.7" fill="#FFFFFF"/>
<rect x="2788.3" y="1660.8" width="256.0" height="3.0" fill="#808080"/>
<rect x="3041.0" y="1604.1" width="3.3" height="59.7" fill="#808080"/>
<text transform="translate(2795.32,1649.10) scale(0.8570,1)" font-size="50.87" font-weight="normal" fill="#000" >LVMN</text>
<rect x="2183.0" y="1663.8" width="74.0" height="56.7" fill="#D4D0C8"/>
<rect x="2183.0" y="1663.8" width="74.0" height="3.5" fill="#FFFFFF"/>
<rect x="2183.0" y="1663.8" width="3.5" height="56.7" fill="#FFFFFF"/>
<rect x="2183.0" y="1720.5" width="77.3" height="3.0" fill="#000000"/>
<rect x="2257.0" y="1663.8" width="3.3" height="59.7" fill="#000000"/>
<rect x="2260.3" y="1663.8" width="252.7" height="59.7" fill="#FFFFFF"/>
<rect x="2260.3" y="1720.5" width="256.0" height="3.0" fill="#808080"/>
<rect x="2513.0" y="1663.8" width="3.3" height="59.7" fill="#808080"/>
<text transform="translate(2268.41,1708.80) scale(0.8444,1)" font-size="50.87" font-weight="normal" fill="#000" >VREM</text>
<rect x="2516.3" y="1663.8" width="132.7" height="59.7" fill="#FFFFFF"/>
<rect x="2516.3" y="1720.5" width="136.0" height="3.0" fill="#808080"/>
<rect x="2649.0" y="1663.8" width="3.3" height="59.7" fill="#808080"/>
<text transform="translate(2536.47,1708.80) scale(0.8547,1)" font-size="50.87" font-weight="normal" fill="#000" >7:30</text>
<rect x="2652.3" y="1663.8" width="132.7" height="59.7" fill="#FFFFFF"/>
<rect x="2652.3" y="1720.5" width="136.0" height="3.0" fill="#808080"/>
<rect x="2785.0" y="1663.8" width="3.3" height="59.7" fill="#808080"/>
<text transform="translate(2672.82,1708.80) scale(0.8511,1)" font-size="50.87" font-weight="normal" fill="#000" >8:00</text>
<rect x="2788.3" y="1663.8" width="252.7" height="59.7" fill="#FFFFFF"/>
<rect x="2788.3" y="1720.5" width="256.0" height="3.0" fill="#808080"/>
<rect x="3041.0" y="1663.8" width="3.3" height="59.7" fill="#808080"/>
<text transform="translate(2795.32,1708.80) scale(0.8570,1)" font-size="50.87" font-weight="normal" fill="#000" >LVMN</text>
<rect x="2183.0" y="1723.5" width="74.0" height="56.7" fill="#D4D0C8"/>
<rect x="2183.0" y="1723.5" width="74.0" height="3.5" fill="#FFFFFF"/>
<rect x="2183.0" y="1723.5" width="3.5" height="56.7" fill="#FFFFFF"/>
<rect x="2183.0" y="1780.2" width="77.3" height="3.0" fill="#000000"/>
<rect x="2257.0" y="1723.5" width="3.3" height="59.7" fill="#000000"/>
<rect x="2260.3" y="1723.5" width="252.7" height="59.7" fill="#FFFFFF"/>
<rect x="2513.0" y="1723.5" width="3.3" height="59.7" fill="#808080"/>
<text transform="translate(2268.41,1768.50) scale(0.8444,1)" font-size="50.87" font-weight="normal" fill="#000" >VREM</text>
<rect x="2516.3" y="1723.5" width="132.7" height="59.7" fill="#FFFFFF"/>
<rect x="2649.0" y="1723.5" width="3.3" height="59.7" fill="#808080"/>
<text transform="translate(2536.47,1768.50) scale(0.8561,1)" font-size="50.87" font-weight="normal" fill="#000" >7:45</text>
<rect x="2652.3" y="1723.5" width="132.7" height="59.7" fill="#FFFFFF"/>
<rect x="2785.0" y="1723.5" width="3.3" height="59.7" fill="#808080"/>
<text transform="translate(2672.82,1768.50) scale(0.8525,1)" font-size="50.87" font-weight="normal" fill="#000" >8:15</text>
<rect x="2788.3" y="1723.5" width="252.7" height="59.7" fill="#FFFFFF"/>
<rect x="3041.0" y="1723.5" width="3.3" height="59.7" fill="#808080"/>
<text transform="translate(2795.32,1768.50) scale(0.8570,1)" font-size="50.87" font-weight="normal" fill="#000" >LVMN</text>
<rect x="3613.0" y="1375.4" width="59.0" height="407.6" fill="url(#chk)"/>
<rect x="3613.0" y="1375.4" width="59.0" height="58.2" fill="#404040"/>
<rect x="3613.0" y="1375.4" width="55.1" height="54.3" fill="#D4D0C8"/>
<rect x="3616.9" y="1379.3" width="51.2" height="50.4" fill="#808080"/>
<rect x="3616.9" y="1379.3" width="47.3" height="46.5" fill="#FFFFFF"/>
<rect x="3620.8" y="1383.2" width="43.4" height="42.6" fill="#D4D0C8"/>
<polygon points="3628.0,1410.5 3657.0,1410.5 3642.5,1397.0" fill="#000"/>
<rect x="3613.0" y="1726.7" width="59.0" height="56.3" fill="#404040"/>
<rect x="3613.0" y="1726.7" width="55.1" height="52.4" fill="#D4D0C8"/>
<rect x="3616.9" y="1730.6" width="51.2" height="48.5" fill="#808080"/>
<rect x="3616.9" y="1730.6" width="47.3" height="44.6" fill="#FFFFFF"/>
<rect x="3620.8" y="1734.5" width="43.4" height="40.7" fill="#D4D0C8"/>
<polygon points="3627.5,1746.0 3657.5,1746.0 3642.5,1761.0" fill="#000"/>
<rect x="3613.0" y="1486.0" width="59.0" height="59.5" fill="#404040"/>
<rect x="3613.0" y="1486.0" width="55.1" height="55.6" fill="#D4D0C8"/>
<rect x="3616.9" y="1489.9" width="51.2" height="51.7" fill="#808080"/>
<rect x="3616.9" y="1489.9" width="47.3" height="47.8" fill="#FFFFFF"/>
<rect x="3620.8" y="1493.8" width="43.4" height="43.9" fill="#D4D0C8"/>
<text transform="translate(683.15,1854.10) scale(0.9315,1)" font-size="46.51" font-weight="normal" fill="#000" >Ready</text>
<path d="M3632,1868 L3680,1820 M3648,1868 L3680,1836 M3664,1868 L3680,1852" stroke="#808080" stroke-width="4"/>
<path d="M3628,1868 L3680,1816 M3644,1868 L3680,1832 M3660,1868 L3680,1848" stroke="#FFFFFF" stroke-width="2.5"/>
<line x1="611.7" y1="881" x2="1615" y2="881" stroke="#000" stroke-width="3.6"/>
<polygon points="1611.0,857.0 1654.0,881.0 1611.0,905.0" fill="#000"/>
<line x1="407.4" y1="1261.6" x2="650" y2="1388.5" stroke="#000" stroke-width="5.2"/>
<polygon points="659.0,1366.0 636.0,1408.0 684.0,1407.0" fill="#000"/>
</svg></body></html>
